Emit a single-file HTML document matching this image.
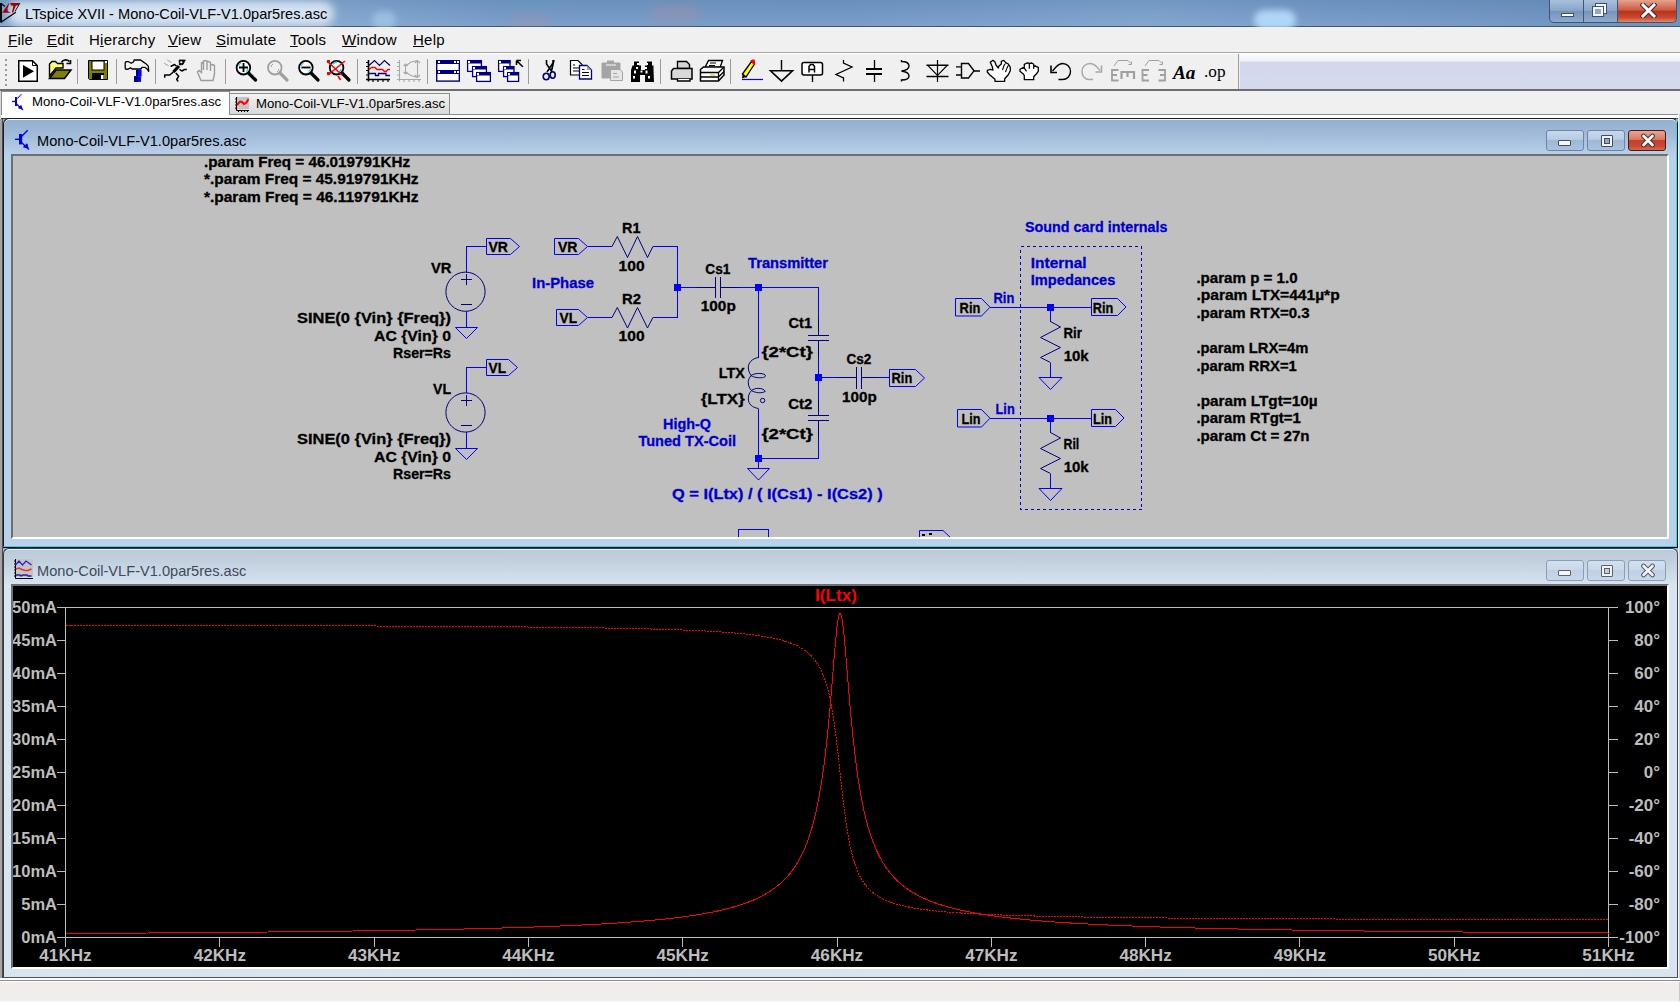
<!DOCTYPE html>
<html><head><meta charset="utf-8">
<style>
*{margin:0;padding:0;box-sizing:border-box}
html,body{width:1680px;height:1002px;overflow:hidden;background:#9ab3d3;font-family:"Liberation Sans",sans-serif}
.a{position:absolute}
svg text{font-family:"Liberation Sans",sans-serif}
#title{left:0;top:0;width:1680px;height:27px;background:linear-gradient(90deg,#7c9fc8 0%,#88abd2 14%,#7198c4 30%,#6f96c3 50%,#7aa0ca 68%,#7097c4 80%,#6f96c3 100%);border-bottom:1px solid #44566e}
#title .glow{left:8px;top:1px;width:326px;height:25px;border-radius:12px;background:rgba(226,236,248,.85);filter:blur(4px)}
#title .txt{left:25px;top:6px;font-size:14.6px;color:#000;white-space:nowrap}
.wb{top:0;height:23px;border:1px solid #44556a;border-top:none;background:linear-gradient(#a9c1de,#86a3c6 50%,#7593b9 51%,#8eaad0)}
#menu{left:0;top:27px;width:1680px;height:26px;background:#f0f0f0;border-bottom:1px solid #c4c4c4}
#menu span{position:absolute;top:4px;font-size:15px;letter-spacing:0.25px;color:#000;white-space:nowrap}
#menu u{text-decoration:underline;text-underline-offset:1px;text-decoration-thickness:1px}
#tool{left:0;top:53px;width:1680px;height:38px;background:#f0f0f0;border-bottom:2px solid #6e6e6e}
#tool .rest{left:1240px;top:0;width:440px;height:36px;background:linear-gradient(#ffffff 0,#eef0f8 8px,#d3d9ec 9px,#d4d9ed 100%)}
#tabs{left:0;top:91px;width:1680px;height:28px;background:#f0f0f0}
#tabs .line{left:0;top:23px;width:1680px;height:1px;background:#898c95}
#tabs .wl{left:0;top:24px;width:1680px;height:3px;background:#fff}
#tabs .dl{left:0;top:27px;width:1680px;height:1px;background:#3c3c3c}
.tab{height:23px;white-space:nowrap;font-size:13.2px;color:#000}
#tab1{left:1px;top:0;width:229px;height:24px;background:#fff;border:1px solid #898c95;border-bottom:none}
#tab2{left:229px;top:2px;width:221px;height:21px;background:linear-gradient(#f2f2f2,#e6e6e6 50%,#d8d8d8);border:1px solid #898c95;border-bottom:none}
#mdi{left:0;top:119px;width:1680px;height:860px;background:#9ab3d3}
#status{left:0;top:978px;width:1680px;height:24px;background:#f0edeb;border-top:2px solid #fff}
.win{left:3px;width:1675px;border:1px solid #1c1c1c;border-radius:6px 6px 0 0}
.win .ttl{left:33px;white-space:nowrap;font-size:14.6px}
.cont{left:7px;width:1658px;height:385px;border-style:solid;border-width:2px;border-color:#6f6f6f #ffffff #ffffff #6f6f6f;overflow:hidden}
.btn{width:38px;height:21px;border:1px solid #6d84a4;border-radius:3px}
</style></head><body>
<div id="title" class="a">
  <div class="a" style="left:0;top:0;width:1680px;height:26px;background:linear-gradient(rgba(60,90,130,.12),rgba(255,255,255,0) 45%,rgba(255,255,255,.08))"></div>
  <div class="a" style="left:1380px;top:0;width:300px;height:26px;background:linear-gradient(90deg,rgba(50,80,120,0),rgba(50,80,120,.12))"></div>
  <div class="a" style="left:1254px;top:10px;width:42px;height:20px;border-radius:12px;background:#b9e0ff;filter:blur(3px);opacity:.85"></div>
  <div class="a" style="left:372px;top:11px;width:24px;height:18px;border-radius:10px;background:#a9d0ee;filter:blur(3px);opacity:.6"></div>
  <div class="a" style="left:510px;top:15px;width:40px;height:12px;border-radius:8px;background:#b88a9c;filter:blur(5px);opacity:.3"></div>
  <div class="a" style="left:650px;top:4px;width:50px;height:18px;border-radius:8px;background:#b88a9c;filter:blur(5px);opacity:.28"></div>
  <div class="a glow"></div>
  <div class="a txt">LTspice XVII - Mono-Coil-VLF-V1.0par5res.asc</div>
  <svg class="a" style="left:0;top:0" width="24" height="26">
    <path d="M1 3V22.6" stroke="#000" stroke-width="1.9"/>
    <path d="M1 3.5L5 6.5" stroke="#000" stroke-width="1.2"/>
    <path d="M1 22.2L15.8 12.3" stroke="#000" stroke-width="1.3"/>
    <path d="M2.2 12.7L6.5 6.5L8.6 3.2H9.2L7.5 8.5L7.8 11.2L10.8 12.7Z" fill="#a00000"/>
    <path d="M10.3 3.1H19.8L18.2 5.2L15.8 5.8L13.2 12.6H11.8L13 8L13.3 5.8L10.8 5.3Z" fill="#a00000"/>
    <path d="M19.8 3.2L15 11.5" stroke="#000" stroke-width="0.9"/>
  </svg>
  <div class="a wb" style="left:1549px;width:35px;border-radius:0 0 0 5px"><div class="a" style="left:11px;top:13px;width:13px;height:4px;background:#fff;border:1px solid #3f4f66"></div></div>
  <div class="a wb" style="left:1583px;width:35px"><div class="a" style="left:12px;top:4px;width:10px;height:9px;border:2px solid #f4f6f9;box-shadow:0 0 0 1px #3f4f66"></div><div class="a" style="left:9px;top:7px;width:10px;height:9px;border:2px solid #f4f6f9;box-shadow:0 0 0 1px #3f4f66;background:#8ea9cb"></div></div>
  <div class="a wb" style="left:1617px;width:60px;border-radius:0 0 5px 0;background:linear-gradient(#e5a48c,#cf5a43 45%,#b8321c 52%,#c9492f 80%,#dd8a6c)">
    <svg class="a" style="left:22px;top:3px" width="17" height="15"><path d="M3 2 L14 13 M14 2 L3 13" stroke="#3e2a2a" stroke-width="5" stroke-linecap="square"/><path d="M3 2 L14 13 M14 2 L3 13" stroke="#fff" stroke-width="3" stroke-linecap="square"/></svg>
  </div>
</div>
<div id="menu" class="a">
  <span style="left:8px"><u>F</u>ile</span>
  <span style="left:47px"><u>E</u>dit</span>
  <span style="left:89px">H<u>i</u>erarchy</span>
  <span style="left:168px"><u>V</u>iew</span>
  <span style="left:216px"><u>S</u>imulate</span>
  <span style="left:290px"><u>T</u>ools</span>
  <span style="left:342px"><u>W</u>indow</span>
  <span style="left:413px"><u>H</u>elp</span>
</div>
<div id="tool" class="a">
  <div class="a rest"></div>
</div>
<svg class="a" style="left:0;top:0" width="1680" height="92">
<path d="M0 52.5H1680" stroke="#a6a6a6"/>
<path d="M0 53.5H1239" stroke="#fff"/>
<!-- grip -->
<g fill="#9a9a9a"><rect x="5" y="59" width="2" height="2"/><rect x="5" y="64" width="2" height="2"/><rect x="5" y="69" width="2" height="2"/><rect x="5" y="74" width="2" height="2"/><rect x="5" y="79" width="2" height="2"/><rect x="5" y="84" width="2" height="2"/></g>
<!-- separators -->
<g stroke="#9c9c9c" shape-rendering="crispEdges">
<path d="M77.5 59V84M116.5 59V84M155.5 59V84M225.5 59V84M357.5 59V84M427.5 59V84M528.5 59V84M660.5 59V84M730.5 59V84"/>
<path d="M1238.5 54V89"/>
</g>
<!-- run -->
<path d="M18.75 60.75H32.5L37.25 65.5V81.25H18.75Z" fill="#fff" stroke="#000" stroke-width="1.5"/>
<path d="M32.5 61V65.5H37" fill="none" stroke="#000"/>
<path d="M23 65L34 71.3L23 77.7Z" fill="#000"/>
<!-- open -->
<path d="M49.5 76V64L52 61.5H55.5L57.5 63.5H63V68H56Z" fill="#ffff70" stroke="#000" stroke-width="1.4"/>
<path d="M49.5 78.5H64.5L71 70H56Z" fill="#808000" stroke="#000" stroke-width="1.5"/>
<path d="M61.5 62.5C62.5 59.5 66.5 59 69.5 61.5" fill="none" stroke="#000" stroke-width="1.6"/>
<path d="M66.5 63.5H70.5V60" fill="none" stroke="#000" stroke-width="1.6"/>
<!-- save -->
<path d="M88.5 60.5H107.5V79.5H89.5L88.5 78.5Z" fill="#808000" stroke="#000"/>
<rect x="92" y="61" width="12" height="9" fill="#fff" stroke="#000"/>
<rect x="105" y="61" width="2" height="2" fill="#fff"/>
<rect x="92" y="73" width="12" height="6.5" fill="#000"/>
<rect x="101" y="75" width="2.5" height="4" fill="#fff"/>
<!-- hammer -->
<path d="M125.2 62.9L126 61.7H128.5L131.3 63.3L133.7 61.7L134.1 60H140.6L143.5 62.1L145.9 63.7L148.3 66.1L148.7 71.4L147.1 69L144.7 67.3H142.2L140.6 69H132.1L130.5 67.7L128.5 69L126 69.4L125.2 68.2Z" fill="#f4f4f4" stroke="#000" stroke-width="1.3" stroke-linejoin="round"/>
<rect x="136" y="69.6" width="5.6" height="6.8" fill="#0000ff"/>
<rect x="136" y="69.6" width="2" height="6.8" fill="#000080"/>
<rect x="134.1" y="76.2" width="6.9" height="5.7" fill="#0000ff"/>
<rect x="134.1" y="76.2" width="3.7" height="5.7" fill="#000080"/>
<!-- runner -->
<g stroke="#000" fill="none" stroke-linejoin="round">
<path d="M179.1 60H185.3L183 64.5L179.5 65Z" fill="#000" stroke-width="0.8"/>
<rect x="180.3" y="61.3" width="2" height="1.8" fill="#fff" stroke="none"/>
<path d="M179 66L173.4 72" stroke-width="3.2"/>
<path d="M170.6 66.5L174.6 64.5L176.5 66.3" stroke-width="1.5"/>
<path d="M179.5 69.4L181.9 71L184.8 69.4H186.8" stroke-width="1.5"/>
<path d="M173.6 71.8L169.8 75H164.7V77.8" stroke-width="1.5"/>
<path d="M175.8 73L178.7 76.2L176.7 79.5L178.2 81.5" stroke-width="1.5"/>
<path d="M167.3 60L171.4 62.5M164.1 63.3L168.6 65.7" stroke="#a0a0a0" stroke-width="1"/>
</g>
<!-- hand gray -->
<path d="M201 80.5L197.5 72L199 70.5L201.5 72.5V63L203.5 62V70V61L205.5 60.5L207 61V70V62L209 61.5L210.5 62.5V71V65L212.5 64.5L214.5 65.5V74L213 80.5Z" fill="none" stroke="#9c9c9c" stroke-width="1.4"/>
<!-- zooms -->
<g>
<path d="M248.5 73L255.5 80" stroke="#000" stroke-width="3.2" stroke-linecap="round"/>
<circle cx="243.4" cy="67.7" r="6.8" fill="#fff" stroke="#000" stroke-width="1.8"/>
<path d="M238.5 66A5 5 0 0 1 241 63M246 71.5A5 5 0 0 0 248 69" stroke="#00e0ff" stroke-width="1.2" fill="none"/>
<path d="M239 67.5H248M243.5 63V72" stroke="#000" stroke-width="1.8"/>
<path d="M280 73L287 80" stroke="#a0a0a0" stroke-width="3.2" stroke-linecap="round"/>
<circle cx="274.8" cy="67.7" r="6.8" fill="none" stroke="#a0a0a0" stroke-width="1.8"/>
<path d="M271 67A4 4 0 0 1 273 64M277 72A4 4 0 0 0 279 69" stroke="#a0a0a0" stroke-width="1" fill="none"/>
<path d="M311 73L318 80" stroke="#000" stroke-width="3.2" stroke-linecap="round"/>
<circle cx="305.9" cy="67.7" r="6.8" fill="#fff" stroke="#000" stroke-width="1.8"/>
<path d="M301 66A5 5 0 0 1 303.5 63M308.5 71.5A5 5 0 0 0 310.5 69" stroke="#00e0ff" stroke-width="1.2" fill="none"/>
<path d="M301.5 67.5H310.5" stroke="#000" stroke-width="1.8"/>
<path d="M342 73L349 80" stroke="#000" stroke-width="3.2" stroke-linecap="round"/>
<circle cx="336.6" cy="67.7" r="6.8" fill="#fff" stroke="#000" stroke-width="1.8"/>
<path d="M333 64A5 5 0 0 1 337 62M339 72A5 5 0 0 0 341 69" stroke="#00e0ff" stroke-width="1.4" fill="none"/>
<path d="M327 61L342 75M345 61L328 75M338 76L340.5 80" stroke="#ff0000" stroke-width="1.6"/>
<rect x="327" y="60" width="3" height="3" fill="#f00"/><rect x="327" y="72" width="3" height="3" fill="#f00"/>
</g>
<!-- plot -->
<g fill="none">
<path d="M368.5 60V81.5M366 79.5H390" stroke="#000" stroke-width="1.6"/>
<path d="M366 62.5H368.5M366 66.5H368.5M366 70.5H368.5M366 75H368.5M373 79.5V82M378 79.5V82M383 79.5V82M388 79.5V82" stroke="#000" stroke-width="1.2"/>
<path d="M369 65.5L374.5 60.5L379.5 65.5L384.5 60.5L390 65.5" stroke="#000080" stroke-width="1.2"/>
<path d="M369 69.5L371.5 67.5H375L377 69.5H382.5L384.5 71.5H386L388 69.5H390" stroke="#ff0000" stroke-width="1.4"/>
<path d="M369 73.5H375.5V75.5H378.5V73.5H386V75.5H390" stroke="#000080" stroke-width="1.3"/>
</g>
<g fill="none" stroke="#a8a8a8" stroke-width="1.1">
<path d="M399.5 60V81.5M397 79.5H421M397 62.5H399.5M397 66.5H399.5M397 70.5H399.5M397 75H399.5M404 79.5V82M409 79.5V82M414 79.5V82M419 79.5V82"/>
<path d="M405 66.5L411 62L417.5 60.5M405 72L411 75.5L417.5 77.5M405.5 64V74M403.5 66L405.5 64L407.5 66M403.5 72L405.5 74L407.5 72M417.5 60.5V77.5M415 63L417.5 60.5L420 63M415 75L417.5 77.5L420 75"/>
</g>
<!-- tile -->
<g fill="none" stroke="#000080" stroke-width="1.4">
<rect x="436.7" y="60.7" width="22.6" height="20.4" fill="#fff"/>
</g>
<rect x="436" y="60" width="24" height="4" fill="#000080"/>
<rect x="436" y="70" width="24" height="4" fill="#000080"/>
<g fill="#fff"><rect x="438" y="61" width="2" height="2"/><rect x="454" y="61" width="2" height="2"/><rect x="457" y="61" width="2" height="2"/><rect x="438" y="71" width="2" height="2"/><rect x="454" y="71" width="2" height="2"/><rect x="457" y="71" width="2" height="2"/></g>
<!-- cascade -->
<g stroke="#000080" stroke-width="1.3" fill="#fff">
<rect x="467.6" y="60.6" width="13.8" height="10.8"/>
<rect x="472.6" y="66.6" width="13.8" height="10"/>
<rect x="476.6" y="72.6" width="13.8" height="8.8"/>
<rect x="498.6" y="60.6" width="11.4" height="10.8"/>
<rect x="503.6" y="66.6" width="10.4" height="10"/>
<rect x="507.6" y="72.6" width="11" height="8.8"/>
</g>
<g fill="#000080"><rect x="467" y="60" width="15" height="3.5"/><rect x="472" y="66" width="15" height="3.5"/><rect x="476" y="72" width="15" height="3.5"/><rect x="498" y="60" width="12.5" height="3.5"/><rect x="503" y="66" width="11" height="3.5"/><rect x="507" y="72" width="12" height="3.5"/></g>
<g fill="#fff"><rect x="468" y="61" width="2" height="2"/><rect x="473" y="67" width="2" height="2"/><rect x="477" y="73" width="2" height="2"/><rect x="499" y="61" width="2" height="2"/><rect x="504" y="67" width="2" height="2"/><rect x="508" y="73" width="2" height="2"/></g>
<path d="M516.5 60.5H521M516.5 60.5V65M517 61L522.5 66.5V67" stroke="#000" stroke-width="1.5" fill="none"/>
<!-- scissors -->
<path d="M546.5 60V64L551.5 71L554 60M553 60V63L547 72" stroke="#000" stroke-width="1.6" fill="none"/>
<ellipse cx="546.2" cy="76.5" rx="3" ry="3.3" fill="none" stroke="#000080" stroke-width="1.6"/>
<ellipse cx="552.7" cy="75" rx="2.5" ry="3.3" fill="none" stroke="#000080" stroke-width="1.6"/>
<!-- copy -->
<path d="M570.5 60.5H578L582 64.5V75H570.5Z" fill="#fff" stroke="#000" stroke-width="1.2"/>
<path d="M573 65H575M573 68H580M573 71H580" stroke="#000" stroke-width="1"/>
<path d="M579.5 65.5H587L591.5 70V79H579.5Z" fill="#fff" stroke="#000080" stroke-width="1.3"/>
<path d="M582 69.5H584.5M582 72.5H589M582 75.5H589" stroke="#000" stroke-width="1.1"/>
<path d="M587 65.5V70H591.5" fill="#a0a0a0"/>
<!-- paste gray -->
<path d="M602.5 62.5H607V60.5H614V62.5H619.5Q620.5 62.5 620.5 63.5V77.5Q620.5 78.5 619.5 78.5H602.5Q601.5 78.5 601.5 77.5V63.5Q601.5 62.5 602.5 62.5Z" fill="#a4a4a4"/>
<path d="M606 65H616" stroke="#e8e8e8" stroke-width="1.3"/>
<path d="M610.5 69.5H620L622.5 72V80.5H610.5Z" fill="#e6e6e6" stroke="#a4a4a4" stroke-width="1"/>
<path d="M613 73.5H617M613 77H619" stroke="#a4a4a4"/>
<!-- binoculars -->
<path d="M634 61.5H639V65.5H641V70H645V65.5H647V61.5H652V65.5H653.5V70L654 82H645V75H640V82H631V70L632.5 65.5H634Z" fill="#000"/>
<g fill="#fff"><rect x="637" y="63" width="2" height="2"/><rect x="646" y="63" width="2" height="2"/><rect x="636" y="67" width="2" height="2"/><rect x="645" y="67" width="2" height="2"/><rect x="634" y="70.5" width="2" height="3"/><rect x="640.5" y="70.5" width="2" height="2"/><rect x="645.5" y="70.5" width="2" height="3"/><rect x="633" y="76" width="2" height="2.5"/><rect x="648" y="76" width="2" height="2.5"/></g>
<!-- printers -->
<path d="M677.5 61.5H686.5L689.5 64.5V68.5H677.5Z" fill="#d8d8d8" stroke="#000" stroke-width="1.4"/>
<path d="M673.5 68.5H692V79H671.5V71Z" fill="#d8d8d8" stroke="#000" stroke-width="1.5"/>
<path d="M677.5 79V81H690V79" fill="#fff" stroke="#000" stroke-width="1.4"/>
<path d="M708.5 60.5H722.5L720 67.5H705Z" fill="#fff" stroke="#000" stroke-width="1.4"/>
<path d="M710 63H716M709 65.5H715" stroke="#000" stroke-width="1.1"/>
<path d="M700.5 69.5L703.5 67H724V75L718.5 81H700.5Z" fill="#fff" stroke="#000" stroke-width="1.5"/>
<path d="M700.5 72.5H718.5L724 67M700.5 77H718.5L724 71.5M718.5 72.5V81" fill="none" stroke="#000" stroke-width="1.3"/>
<path d="M710 75H715" stroke="#e0d000" stroke-width="1.2"/>
<!-- pencil -->
<path d="M742.5 74L751.5 61.5L754.5 64L746 77Z" fill="#ffff00" stroke="#000" stroke-width="1.3"/>
<path d="M751 61L752.5 60H754L754.5 61.5V64Z" fill="#ff0000" stroke="#ff0000" stroke-width="1.2"/>
<path d="M742.5 74L742 78.5L746 77Z" fill="#000"/>
<path d="M742 79.5H763" stroke="#0000ff" stroke-width="1.2"/>
<!-- ground -->
<path d="M781.5 60V71" stroke="#000" stroke-width="1.4"/>
<path d="M770.5 70.8H792.5L781.5 81.2Z" fill="none" stroke="#000" stroke-width="1.6"/>
<!-- label -->
<rect x="802" y="62.5" width="20.5" height="12.5" rx="2" fill="#fff" stroke="#000" stroke-width="1.5"/>
<path d="M812.5 75V82" stroke="#000" stroke-width="1.4"/>
<path d="M809 72.5V66.5L810.5 64.5H813L814.5 66.5V72.5M809 69.5H814.5" stroke="#000" stroke-width="1.5" fill="none"/>
<!-- resistor -->
<path d="M843.5 60V63L852 67L836 74.5L843.5 78V81.5" fill="none" stroke="#000" stroke-width="1.3"/>
<!-- capacitor -->
<path d="M874.5 60V69M874.5 74V82" stroke="#000" stroke-width="1.3"/>
<path d="M866 69H882M866 74H882" stroke="#000" stroke-width="1.8"/>
<!-- inductor -->
<path d="M901.5 60V61.5C907 61.5 909 63 909 66C909 69 905 70.5 901.5 71C905 71.5 909 73 909 76C909 79 907 80 901.5 80V81.5" fill="none" stroke="#000" stroke-width="1.4"/>
<!-- diode -->
<path d="M937.5 60V82" stroke="#000" stroke-width="1.2"/>
<path d="M926.5 65.2H948.5M926.5 76.5H948.5" stroke="#000" stroke-width="1.4"/>
<path d="M927.5 65.2L937.5 75.5L947.5 65.2" fill="none" stroke="#000" stroke-width="1.2"/>
<!-- and gate -->
<path d="M961.5 63.5H968.5L974 70.8L968.5 78H961.5Z" fill="none" stroke="#000" stroke-width="1.4"/>
<path d="M956 66.8H961.5M956 75H961.5M974 71H980" stroke="#000" stroke-width="1.3"/>
<!-- hand open -->
<path d="M995 81.3H1004.7V78.7L1008.3 74.7L1010.3 70.7V67.3L1008.3 64L1005.7 62.7L1003.7 60.3L1001.3 61.3V64L999 66L998.3 68L996 65L995 62L993 60.3L990.3 62.3L992.3 66.7L993 70L990.3 69.3L987.3 70.3V72L989.7 74.7L992.3 77L995 79.3Z" fill="#fff" stroke="#000" stroke-width="1.3" stroke-linejoin="round"/>
<path d="M1002.5 70L1004 65.5L1005.5 63.5M1005.5 72L1007 68L1008.5 65" fill="none" stroke="#000" stroke-width="1.1"/>
<!-- hand fist -->
<path d="M1024.3 79.7H1033.7V76.7L1036.3 74L1038.3 71.3V67.3L1036 66.3L1033.7 66V64.3L1031.7 63L1029.7 63.3L1027 63L1024.3 64.3V67.3L1022.3 68L1020 69.3V71.3L1023.3 74L1024.3 75.7Z" fill="#fff" stroke="#000" stroke-width="1.3" stroke-linejoin="round"/>
<path d="M1029.3 63.5V68.7M1033.7 66V68.7M1022 68.2H1024.3L1026.5 71.3M1033.7 66.2H1036" fill="none" stroke="#000" stroke-width="1.2"/>
<!-- undo -->
<path d="M1058.5 79.5H1062.5C1067 79.5 1070.5 76 1070.5 71.5C1070.5 67 1067 63.5 1062.5 63.5C1060 63.5 1058 65 1056 67L1052.5 71" fill="none" stroke="#000" stroke-width="1.4"/>
<path d="M1051 65.5V72.5H1057" fill="none" stroke="#000" stroke-width="1.6"/>
<!-- redo gray -->
<path d="M1093 79.5H1089C1085 79.5 1082 76 1082 71.5C1082 67 1085.5 63.5 1090 63.5C1093 63.5 1095 65 1097 67L1100 70.5" fill="none" stroke="#a8a8a8" stroke-width="1.4"/>
<path d="M1101.5 65.5V72H1095.5" fill="none" stroke="#a8a8a8" stroke-width="1.6"/>
<!-- rotate/mirror gray -->
<g fill="none" stroke="#a0a0a0">
<path d="M1118.5 70H1112V80.5H1118.5M1112 75H1117" stroke-width="1.8"/>
<path d="M1121.5 79V72H1134V79M1127.5 72V77" stroke-width="2.2"/>
<path d="M1114 66L1118 60.5H1128L1131 63.5M1128.5 64.5H1131.5V61.5" stroke-width="1"/>
<path d="M1149 70H1142.5V80.5H1149M1142.5 75H1147.5" stroke-width="1.8"/>
<path d="M1158.5 70H1165V80.5H1158.5M1165 75H1160" stroke-width="1.8"/>
<path d="M1145 66L1149 60.5H1159L1162 63.5M1159.5 64.5H1162.5V61.5" stroke-width="1"/>
</g>
<!-- Aa .op -->
<text x="1173" y="78.8" style="font-family:'Liberation Serif';font-weight:bold;font-style:italic;font-size:19px" fill="#000" textLength="22.5" lengthAdjust="spacingAndGlyphs">Aa</text>
<text x="1204" y="77" style="font-family:'Liberation Serif';font-size:17px" fill="#000" textLength="21.5" lengthAdjust="spacingAndGlyphs">.op</text>
</svg>
<div id="tabs" class="a">
  <div class="a line"></div>
  <div class="a wl"></div>
  <div class="a dl"></div>
  <div class="a" style="left:0;top:0;width:1px;height:28px;background:#d8d8d8"></div>
  <div id="tab2" class="a tab">
    <svg class="a" style="left:3px;top:2px" width="17" height="17">
      <rect x="3" y="1" width="13" height="12" fill="#c4c4c4"/>
      <path d="M3.5 1V14.5H16" stroke="#000" fill="none"/>
      <path d="M2 3h1.5M2 6h1.5M2 9h1.5M2 12h1.5M5.5 14.5v1.5M8.5 14.5v1.5M11.5 14.5v1.5M14.5 14.5v1.5" stroke="#000"/>
      <path d="M4 9 L7 5.5 L9 6 L11 8 L13.5 6.5 L15.5 3" stroke="#f00" stroke-width="2" fill="none"/>
    </svg>
    <div class="a" style="left:26px;top:2px">Mono-Coil-VLF-V1.0par5res.asc</div>
  </div>
  <div id="tab1" class="a tab">
    <svg class="a" style="left:10px;top:2px" width="14" height="18">
      <path d="M0 7.5H3.5" stroke="#0000e8" stroke-width="1.3"/>
      <rect x="3" y="3" width="2" height="9" fill="#0000d0"/>
      <path d="M4.5 5L10 0" stroke="#0000e8" stroke-width="1.2" stroke-dasharray="1.2,0.6"/>
      <path d="M4.5 10L11 16" stroke="#0000e8" stroke-width="1.2"/>
      <path d="M6.5 14L9 11.5L10 14.5Z" fill="#0000c0" stroke="#0000c0"/>
    </svg>
    <div class="a" style="left:30px;top:2px">Mono-Coil-VLF-V1.0par5res.asc</div>
  </div>
</div>
<div id="mdi" class="a">
  <div class="a" style="left:0;top:0;width:2px;height:860px;background:#a3a3a3"></div>
  <div class="a" style="left:2px;top:0;width:1px;height:860px;background:#4a4a4a"></div>
  <div class="a" style="left:1678px;top:-5px;width:2px;height:865px;background:#f0f0f0;border-right:1px solid #d4d4d4"></div>
</div>

<!-- schematic window (active) -->
<div class="a win" style="top:118px;height:430px;background:linear-gradient(#93afd0 0,#a0b9d7 14px,#b2cae4 30px,#b9d2ec 36px);box-shadow:inset 0 1px 0 #f4f8fc;border-color:#1c1c1c #111 #0a0a0a #1c1c1c">
  <div class="a" style="left:-1px;top:-1px;width:1674px;height:429px;border:1px solid transparent;border-right-color:#39d0f0;border-bottom-color:#39d0f0;pointer-events:none"></div>
  <svg class="a" style="left:11px;top:10px" width="16" height="22">
    <path d="M0 10.3H4.5" stroke="#0000f0" stroke-width="1.4"/>
    <rect x="4" y="5" width="3.2" height="10.4" fill="#0000e0"/>
    <path d="M6.5 7.5L12.7 1.2" stroke="#0000f0" stroke-width="1.3"/>
    <path d="M6.5 13.5L14 20.5" stroke="#0000f0" stroke-width="1.3"/>
    <path d="M8.5 18L12 14.8L13 19Z" fill="#0000e0" stroke="#0000e0"/>
  </svg>
  <div class="a ttl" style="top:14px;color:#000">Mono-Coil-VLF-V1.0par5res.asc</div>
  <div class="a btn" style="left:1542px;top:11px;background:linear-gradient(#c8d9ee,#b5cae3 45%,#9fb8d6 50%,#a9c2e0)"><div class="a" style="left:11px;top:9px;width:13px;height:6px;background:#f6f6f6;border:1px solid #444c5c;border-radius:1px"></div></div>
  <div class="a btn" style="left:1583px;top:11px;background:linear-gradient(#c8d9ee,#b5cae3 45%,#9fb8d6 50%,#a9c2e0)"><div class="a" style="left:13px;top:4px;width:12px;height:12px;background:#f2f2f2;border:1px solid #444c5c;border-radius:1px"><div class="a" style="left:2px;top:2px;width:6px;height:6px;border:1px solid #444c5c;background:#8fa7c8"></div></div></div>
  <div class="a btn" style="left:1624px;top:11px;border-color:#4a1818;background:linear-gradient(#e8a693,#d9775f 45%,#c2402a 50%,#c94a31 80%,#d56a50)">
    <svg class="a" style="left:11px;top:2px" width="16" height="15"><path d="M3.5 3 L12.5 12 M12.5 3 L3.5 12" stroke="#42303a" stroke-width="4.6" stroke-linecap="round"/><path d="M3.5 3 L12.5 12 M12.5 3 L3.5 12" stroke="#fff" stroke-width="2.6" stroke-linecap="round"/></svg>
  </div>
  <div class="a cont" style="top:35px;background:#c0c0c0">
<svg class="a" style="left:-13px;top:-156px" width="1680" height="560">
<g font-weight="bold" font-size="14.5">
<text x="204" y="167" textLength="206" lengthAdjust="spacingAndGlyphs" fill="#000" stroke="#000" stroke-width="0.3">.param Freq = 46.019791KHz</text>
<text x="204" y="184" textLength="214.5" lengthAdjust="spacingAndGlyphs" fill="#000" stroke="#000" stroke-width="0.3">*.param Freq = 45.919791KHz</text>
<text x="204" y="201.5" textLength="214.5" lengthAdjust="spacingAndGlyphs" fill="#000" stroke="#000" stroke-width="0.3">*.param Freq = 46.119791KHz</text>
<text x="431" y="272.5" textLength="20.5" lengthAdjust="spacingAndGlyphs" fill="#000" stroke="#000" stroke-width="0.3">VR</text>
<text x="297" y="323" textLength="154" lengthAdjust="spacingAndGlyphs" fill="#000" stroke="#000" stroke-width="0.3">SINE(0 {Vin} {Freq})</text>
<text x="374" y="341" textLength="77" lengthAdjust="spacingAndGlyphs" fill="#000" stroke="#000" stroke-width="0.3">AC {Vin} 0</text>
<text x="393" y="357.5" textLength="58" lengthAdjust="spacingAndGlyphs" fill="#000" stroke="#000" stroke-width="0.3">Rser=Rs</text>
<text x="433" y="394" textLength="18" lengthAdjust="spacingAndGlyphs" fill="#000" stroke="#000" stroke-width="0.3">VL</text>
<text x="297" y="444" textLength="154" lengthAdjust="spacingAndGlyphs" fill="#000" stroke="#000" stroke-width="0.3">SINE(0 {Vin} {Freq})</text>
<text x="374" y="461.5" textLength="77" lengthAdjust="spacingAndGlyphs" fill="#000" stroke="#000" stroke-width="0.3">AC {Vin} 0</text>
<text x="393" y="478.5" textLength="58" lengthAdjust="spacingAndGlyphs" fill="#000" stroke="#000" stroke-width="0.3">Rser=Rs</text>
<text x="488.5" y="252" textLength="19.5" lengthAdjust="spacingAndGlyphs" fill="#000" stroke="#000" stroke-width="0.3">VR</text>
<text x="488.5" y="373" textLength="17.5" lengthAdjust="spacingAndGlyphs" fill="#000" stroke="#000" stroke-width="0.3">VL</text>
<text x="558" y="252" textLength="19.5" lengthAdjust="spacingAndGlyphs" fill="#000" stroke="#000" stroke-width="0.3">VR</text>
<text x="559.5" y="323" textLength="17.5" lengthAdjust="spacingAndGlyphs" fill="#000" stroke="#000" stroke-width="0.3">VL</text>
<text x="622" y="233" textLength="18.5" lengthAdjust="spacingAndGlyphs" fill="#000" stroke="#000" stroke-width="0.3">R1</text>
<text x="618.6" y="271" textLength="26" lengthAdjust="spacingAndGlyphs" fill="#000" stroke="#000" stroke-width="0.3">100</text>
<text x="622" y="304" textLength="19" lengthAdjust="spacingAndGlyphs" fill="#000" stroke="#000" stroke-width="0.3">R2</text>
<text x="618.6" y="341" textLength="26" lengthAdjust="spacingAndGlyphs" fill="#000" stroke="#000" stroke-width="0.3">100</text>
<text x="705.3" y="274" textLength="25" lengthAdjust="spacingAndGlyphs" fill="#000" stroke="#000" stroke-width="0.3">Cs1</text>
<text x="700.8" y="311" textLength="35" lengthAdjust="spacingAndGlyphs" fill="#000" stroke="#000" stroke-width="0.3">100p</text>
<text x="788.6" y="328" textLength="23.5" lengthAdjust="spacingAndGlyphs" fill="#000" stroke="#000" stroke-width="0.3">Ct1</text>
<text x="761.4" y="357.2" textLength="51.5" lengthAdjust="spacingAndGlyphs" fill="#000" stroke="#000" stroke-width="0.3">{2*Ct}</text>
<text x="846.4" y="364" textLength="25" lengthAdjust="spacingAndGlyphs" fill="#000" stroke="#000" stroke-width="0.3">Cs2</text>
<text x="842" y="402" textLength="34.7" lengthAdjust="spacingAndGlyphs" fill="#000" stroke="#000" stroke-width="0.3">100p</text>
<text x="891.6" y="382.8" textLength="20.7" lengthAdjust="spacingAndGlyphs" fill="#000" stroke="#000" stroke-width="0.3">Rin</text>
<text x="788.3" y="409" textLength="24" lengthAdjust="spacingAndGlyphs" fill="#000" stroke="#000" stroke-width="0.3">Ct2</text>
<text x="761.4" y="438.8" textLength="51.5" lengthAdjust="spacingAndGlyphs" fill="#000" stroke="#000" stroke-width="0.3">{2*Ct}</text>
<text x="718.7" y="378.2" textLength="26.2" lengthAdjust="spacingAndGlyphs" fill="#000" stroke="#000" stroke-width="0.3">LTX</text>
<text x="700.7" y="403.6" textLength="44.2" lengthAdjust="spacingAndGlyphs" fill="#000" stroke="#000" stroke-width="0.3">{LTX}</text>
<text x="959.6" y="312.7" textLength="20.8" lengthAdjust="spacingAndGlyphs" fill="#000" stroke="#000" stroke-width="0.3">Rin</text>
<text x="1092.8" y="312.7" textLength="20.5" lengthAdjust="spacingAndGlyphs" fill="#000" stroke="#000" stroke-width="0.3">Rin</text>
<text x="1063.4" y="337.6" textLength="18.4" lengthAdjust="spacingAndGlyphs" fill="#000" stroke="#000" stroke-width="0.3">Rir</text>
<text x="1063.7" y="360.6" textLength="25" lengthAdjust="spacingAndGlyphs" fill="#000" stroke="#000" stroke-width="0.3">10k</text>
<text x="961.4" y="424" textLength="19" lengthAdjust="spacingAndGlyphs" fill="#000" stroke="#000" stroke-width="0.3">Lin</text>
<text x="1093" y="424" textLength="19" lengthAdjust="spacingAndGlyphs" fill="#000" stroke="#000" stroke-width="0.3">Lin</text>
<text x="1063.5" y="449" textLength="15.8" lengthAdjust="spacingAndGlyphs" fill="#000" stroke="#000" stroke-width="0.3">Ril</text>
<text x="1063.7" y="471.8" textLength="25" lengthAdjust="spacingAndGlyphs" fill="#000" stroke="#000" stroke-width="0.3">10k</text>
<text x="1196.4" y="282.7" textLength="101.2" lengthAdjust="spacingAndGlyphs" fill="#000" stroke="#000" stroke-width="0.3">.param p = 1.0</text>
<text x="1196.4" y="300" textLength="143.3" lengthAdjust="spacingAndGlyphs" fill="#000" stroke="#000" stroke-width="0.3">.param LTX=441µ*p</text>
<text x="1196.4" y="317.8" textLength="113.2" lengthAdjust="spacingAndGlyphs" fill="#000" stroke="#000" stroke-width="0.3">.param RTX=0.3</text>
<text x="1196.4" y="353" textLength="111.9" lengthAdjust="spacingAndGlyphs" fill="#000" stroke="#000" stroke-width="0.3">.param LRX=4m</text>
<text x="1196.4" y="370.5" textLength="100.3" lengthAdjust="spacingAndGlyphs" fill="#000" stroke="#000" stroke-width="0.3">.param RRX=1</text>
<text x="1196.4" y="405.6" textLength="121.1" lengthAdjust="spacingAndGlyphs" fill="#000" stroke="#000" stroke-width="0.3">.param LTgt=10µ</text>
<text x="1196.4" y="423" textLength="104.5" lengthAdjust="spacingAndGlyphs" fill="#000" stroke="#000" stroke-width="0.3">.param RTgt=1</text>
<text x="1196.4" y="440.6" textLength="113.2" lengthAdjust="spacingAndGlyphs" fill="#000" stroke="#000" stroke-width="0.3">.param Ct = 27n</text>
<text x="532" y="288" textLength="62" lengthAdjust="spacingAndGlyphs" fill="#0000cc" stroke="#0000cc" stroke-width="0.3">In-Phase</text>
<text x="748" y="268.2" textLength="80" lengthAdjust="spacingAndGlyphs" fill="#0000cc" stroke="#0000cc" stroke-width="0.3">Transmitter</text>
<text x="663" y="429" textLength="48" lengthAdjust="spacingAndGlyphs" fill="#0000cc" stroke="#0000cc" stroke-width="0.3">High-Q</text>
<text x="638.4" y="446" textLength="97.7" lengthAdjust="spacingAndGlyphs" fill="#0000cc" stroke="#0000cc" stroke-width="0.3">Tuned TX-Coil</text>
<text x="672" y="498.8" textLength="210.6" lengthAdjust="spacingAndGlyphs" fill="#0000cc" stroke="#0000cc" stroke-width="0.3">Q = I(Ltx) / ( I(Cs1) - I(Cs2) )</text>
<text x="1025" y="232" textLength="142.4" lengthAdjust="spacingAndGlyphs" fill="#0000cc" stroke="#0000cc" stroke-width="0.3">Sound card internals</text>
<text x="1030.8" y="268" textLength="55.8" lengthAdjust="spacingAndGlyphs" fill="#0000cc" stroke="#0000cc" stroke-width="0.3">Internal</text>
<text x="1030.8" y="285" textLength="84.6" lengthAdjust="spacingAndGlyphs" fill="#0000cc" stroke="#0000cc" stroke-width="0.3">Impedances</text>
<text x="993.5" y="302.8" textLength="20.8" lengthAdjust="spacingAndGlyphs" fill="#0000cc" stroke="#0000cc" stroke-width="0.3">Rin</text>
<text x="995.5" y="414" textLength="19.2" lengthAdjust="spacingAndGlyphs" fill="#0000cc" stroke="#0000cc" stroke-width="0.3">Lin</text>
</g>
<g stroke-width="1">
<circle cx="465.5" cy="291.7" r="19.6" stroke="#000080" fill="none"/>
<path d="M466.5 274V285M461 279.5H472M461 304.5H472" stroke="#000080" shape-rendering="crispEdges"/>
<path d="M466.5 273 L466.5 246.5 L486 246.5" stroke="#0000ff" fill="none" shape-rendering="crispEdges"/>
<path d="M486.5 238.5 H510.5 L519.5 246.5 L510.5 254.5 H486.5Z" stroke="#0000ff" fill="none"/>
<path d="M466.5 311 L466.5 327.5" stroke="#0000ff" fill="none" shape-rendering="crispEdges"/>
<path d="M455.5 327.5 H477.5 L466.5 338.5Z" stroke="#0000ff" fill="none"/>
<circle cx="465.5" cy="412.5" r="19.6" stroke="#000080" fill="none"/>
<path d="M466.5 395V406M461 400.5H472M461 425.5H472" stroke="#000080" shape-rendering="crispEdges"/>
<path d="M466.5 393 L466.5 367.5 L486 367.5" stroke="#0000ff" fill="none" shape-rendering="crispEdges"/>
<path d="M486.5 359.5 H508.5 L517.5 367.5 L508.5 375.5 H486.5Z" stroke="#0000ff" fill="none"/>
<path d="M466.5 432 L466.5 448.5" stroke="#0000ff" fill="none" shape-rendering="crispEdges"/>
<path d="M455.5 448.5 H477.5 L466.5 459.5Z" stroke="#0000ff" fill="none"/>
<path d="M554.5 238.5 H578.5 L587.5 246.5 L578.5 254.5 H554.5Z" stroke="#0000ff" fill="none"/>
<path d="M556.5 309.5 H578.5 L587.5 317.5 L578.5 325.5 H556.5Z" stroke="#0000ff" fill="none"/>
<path d="M587.5 246.5 L612 246.5" stroke="#0000ff" fill="none" shape-rendering="crispEdges"/>
<path d="M587.5 317.5 L612 317.5" stroke="#0000ff" fill="none" shape-rendering="crispEdges"/>
<path d="M612 246.5 L617.3 236.5 L627.5 257.5 L637.5 236.5 L647.5 257.5 L652.9 246.5" stroke="#000080" fill="none" />
<path d="M612 317.5 L617.3 307.5 L627.5 328 L637.5 307.5 L647.5 328 L652.9 317.5" stroke="#000080" fill="none" />
<path d="M653 246.5 L677.5 246.5 L677.5 317.5 L653 317.5" stroke="#0000ff" fill="none" shape-rendering="crispEdges"/>
<rect x="674.0" y="284.0" width="7" height="7" fill="#0000ff" shape-rendering="crispEdges"/>
<path d="M677.5 287.5 L697 287.5" stroke="#0000ff" fill="none" shape-rendering="crispEdges"/>
<path d="M697 287.5 L715.5 287.5" stroke="#000080" fill="none" shape-rendering="crispEdges"/>
<path d="M715.5 277V298M720.5 277V298" stroke="#000080" shape-rendering="crispEdges"/>
<path d="M720.5 287.5 L739 287.5" stroke="#000080" fill="none" shape-rendering="crispEdges"/>
<path d="M739 287.5 L818.5 287.5 L818.5 318" stroke="#0000ff" fill="none" shape-rendering="crispEdges"/>
<rect x="755.0" y="284.0" width="7" height="7" fill="#0000ff" shape-rendering="crispEdges"/>
<path d="M818.5 318 L818.5 335.5" stroke="#000080" fill="none" shape-rendering="crispEdges"/>
<path d="M808 335.5H829M808 340.5H829" stroke="#000080" shape-rendering="crispEdges"/>
<path d="M818.5 340.5 L818.5 357" stroke="#000080" fill="none" shape-rendering="crispEdges"/>
<path d="M818.5 357 L818.5 399" stroke="#0000ff" fill="none" shape-rendering="crispEdges"/>
<rect x="815.0" y="374.0" width="7" height="7" fill="#0000ff" shape-rendering="crispEdges"/>
<path d="M818.5 377.5 L837 377.5" stroke="#0000ff" fill="none" shape-rendering="crispEdges"/>
<path d="M837 377.5 L856.5 377.5" stroke="#000080" fill="none" shape-rendering="crispEdges"/>
<path d="M856.5 367V389M861.5 367V389" stroke="#000080" shape-rendering="crispEdges"/>
<path d="M861.5 377.5 L879 377.5" stroke="#000080" fill="none" shape-rendering="crispEdges"/>
<path d="M879 377.5 L889.5 377.5" stroke="#0000ff" fill="none" shape-rendering="crispEdges"/>
<path d="M889.5 369.5 H915.5 L924.5 378.0 L915.5 386.5 H889.5Z" stroke="#0000ff" fill="none"/>
<path d="M818.5 399 L818.5 415.5" stroke="#000080" fill="none" shape-rendering="crispEdges"/>
<path d="M808 415.5H829M808 420.5H829" stroke="#000080" shape-rendering="crispEdges"/>
<path d="M818.5 420.5 L818.5 437" stroke="#000080" fill="none" shape-rendering="crispEdges"/>
<path d="M818.5 437 L818.5 458.5 L758.5 458.5" stroke="#0000ff" fill="none" shape-rendering="crispEdges"/>
<rect x="755.0" y="455.0" width="7" height="7" fill="#0000ff" shape-rendering="crispEdges"/>
<path d="M758.5 458.5 L758.5 468.5" stroke="#0000ff" fill="none" shape-rendering="crispEdges"/>
<path d="M747.5 468.5 H769.5 L758.5 480Z" stroke="#0000ff" fill="none"/>
<path d="M758.5 287.5 L758.5 357.5" stroke="#0000ff" fill="none" shape-rendering="crispEdges"/>
<path d="M758.5 357.5 C752 358.5 748 363 748.3 368 C748.5 371 749.5 373 751 375.5 M751 375.5 C755 372.5 765.5 373 765.5 375.8 C765.5 378.5 755 378.5 751 375.5 C748.5 379 748 381 748.3 383 C748.5 386 749.5 388.5 751.5 390.5 M751.5 390.5 C755 387.5 763 387.5 765.5 391.5 M751.5 390.5 C755 393 762 393.5 765 391.5 M751.5 390.5 C749 393.5 748.2 396 748.3 399 C748.5 404 752 407.5 758.5 408.5" stroke="#000080" fill="none"/>
<circle cx="762.6" cy="400.5" r="2.2" stroke="#000080" fill="none"/>
<path d="M758.5 408.5 L758.5 458.5" stroke="#0000ff" fill="none" shape-rendering="crispEdges"/>
<rect x="1020.5" y="246.5" width="121" height="263" stroke="#0000cc" fill="none" stroke-dasharray="3,3" shape-rendering="crispEdges"/>
<path d="M955.5 298.5 H981.5 L990 307.25 L981.5 316.0 H955.5Z" stroke="#0000ff" fill="none"/>
<path d="M990 307.5 L1091 307.5" stroke="#0000ff" fill="none" shape-rendering="crispEdges"/>
<rect x="1047.0" y="304.0" width="7" height="7" fill="#0000ff" shape-rendering="crispEdges"/>
<path d="M1091.5 298.5 H1117.5 L1126 307.0 L1117.5 315.5 H1091.5Z" stroke="#0000ff" fill="none"/>
<path d="M1050.5 307.5 L1050.5 321.5" stroke="#0000ff" fill="none" shape-rendering="crispEdges"/>
<path d="M1050.5 321.5 L1060.5 327.0 L1040.5 337.5 L1060.5 347.5 L1040.5 357.5 L1050.5 362.5" stroke="#000080" fill="none" />
<path d="M1050.5 362.5 L1050.5 377.5" stroke="#0000ff" fill="none" shape-rendering="crispEdges"/>
<path d="M1039.0 377.5 H1062.0 L1050.5 389.5Z" stroke="#0000ff" fill="none"/>
<path d="M957.5 409.5 H981.5 L990 418.25 L981.5 427.0 H957.5Z" stroke="#0000ff" fill="none"/>
<path d="M990 418.5 L1091 418.5" stroke="#0000ff" fill="none" shape-rendering="crispEdges"/>
<rect x="1047.0" y="415.0" width="7" height="7" fill="#0000ff" shape-rendering="crispEdges"/>
<path d="M1091.5 409.5 H1115.5 L1124 418.0 L1115.5 426.5 H1091.5Z" stroke="#0000ff" fill="none"/>
<path d="M1050.5 418.5 L1050.5 432.5" stroke="#0000ff" fill="none" shape-rendering="crispEdges"/>
<path d="M1050.5 432.5 L1060.5 438.0 L1040.5 448.5 L1060.5 458.5 L1040.5 468.5 L1050.5 473.5" stroke="#000080" fill="none" />
<path d="M1050.5 473.5 L1050.5 488.5" stroke="#0000ff" fill="none" shape-rendering="crispEdges"/>
<path d="M1039.0 488.5 H1062.0 L1050.5 500.5Z" stroke="#0000ff" fill="none"/>
<path d="M738.5 540 L738.5 529.5 L768.5 529.5 L768.5 540" stroke="#0000ff" fill="none" shape-rendering="crispEdges"/>
<path d="M919.5 540V530.5H943L952 539" stroke="#0000ff" fill="none"/>
<rect x="922" y="534" width="3" height="2" fill="#000"/><rect x="929" y="533" width="3" height="2" fill="#000"/>
</g>
</svg>
  </div>
</div>

<!-- plot window (inactive) -->
<div class="a win" style="top:548px;height:430px;background:linear-gradient(#bccbdb 0,#c2d0de 12px,#d3e1ef 32px,#d7e5f2 36px);box-shadow:inset 0 1px 0 #e6eef6;border-color:#3c3c3c #4a4a4a #555 #3c3c3c">
  <svg class="a" style="left:10px;top:10px" width="20" height="20">
    <rect x="1" y="0" width="18" height="18" fill="#c4c4c4"/>
    <path d="M1.5 0V19.5H19" stroke="#000" fill="none"/>
    <path d="M0 2h1.5M0 5h1.5M0 8h1.5M0 11h1.5M0 14h1.5M0 17h1.5M4.5 19.5v1M7.5 19.5v1M10.5 19.5v1M13.5 19.5v1M16.5 19.5v1" stroke="#000"/>
    <path d="M1.5 6 L5 2 L8.5 6 L12 2 L17.5 6" stroke="#2020e0" stroke-width="1.2" fill="none"/>
    <path d="M2 10 L5 9 L8 10.5 L11 11.5 L14 11.5 L17.5 10" stroke="#f03030" stroke-width="1.6" fill="none"/>
    <path d="M2 16 L6 16 L7 17 L9 16 L13 16 L14 17 L17.5 17" stroke="#2020a0" stroke-width="1.4" fill="none"/>
  </svg>
  <div class="a ttl" style="top:14px;color:#3e4a58">Mono-Coil-VLF-V1.0par5res.asc</div>
  <div class="a btn" style="left:1542px;top:11px;border-color:#8d9db5;background:linear-gradient(#d3e0ee,#c9d8e9 45%,#bfd0e4 50%,#c8d8ea)"><div class="a" style="left:11px;top:9px;width:13px;height:6px;background:#f6f6f6;border:1px solid #5a6070;border-radius:1px"></div></div>
  <div class="a btn" style="left:1583px;top:11px;border-color:#8d9db5;background:linear-gradient(#d3e0ee,#c9d8e9 45%,#bfd0e4 50%,#c8d8ea)"><div class="a" style="left:13px;top:4px;width:12px;height:12px;background:#f2f2f2;border:1px solid #5a6070;border-radius:1px"><div class="a" style="left:2px;top:2px;width:6px;height:6px;border:1px solid #5a6070;background:#c0cfe0"></div></div></div>
  <div class="a btn" style="left:1624px;top:11px;border-color:#8d9db5;background:linear-gradient(#d3e0ee,#c9d8e9 45%,#bfd0e4 50%,#c8d8ea)">
    <svg class="a" style="left:11px;top:2px" width="16" height="15"><path d="M3.5 3 L12.5 12 M12.5 3 L3.5 12" stroke="#525a66" stroke-width="4.6" stroke-linecap="round"/><path d="M3.5 3 L12.5 12 M12.5 3 L3.5 12" stroke="#f4f4f4" stroke-width="2.6" stroke-linecap="round"/></svg>
  </div>
  <div class="a cont" style="top:35px;background:#000">
    <div class="a" style="left:-13px;top:-586px;width:1680px;height:1002px">
<svg class="a" style="left:0;top:0" width="1680" height="1002">
<g stroke="#bdbdbd" stroke-width="1" fill="none" shape-rendering="crispEdges">
<path d="M65.5 607.5H1608.5M65.5 607.5V946.5M1608.5 607.5V946.5M65.5 937.5H1608.5"/>
<path d="M56.5 607.5H65.5M1608.5 607.5H1617.5"/>
<path d="M65.5 937.5V946.5"/>
<path d="M56.5 640.5H65.5M1608.5 640.5H1617.5"/>
<path d="M219.5 937.5V946.5"/>
<path d="M56.5 673.5H65.5M1608.5 673.5H1617.5"/>
<path d="M374.5 937.5V946.5"/>
<path d="M56.5 706.5H65.5M1608.5 706.5H1617.5"/>
<path d="M528.5 937.5V946.5"/>
<path d="M56.5 739.5H65.5M1608.5 739.5H1617.5"/>
<path d="M682.5 937.5V946.5"/>
<path d="M56.5 772.5H65.5M1608.5 772.5H1617.5"/>
<path d="M837.5 937.5V946.5"/>
<path d="M56.5 805.5H65.5M1608.5 805.5H1617.5"/>
<path d="M991.5 937.5V946.5"/>
<path d="M56.5 838.5H65.5M1608.5 838.5H1617.5"/>
<path d="M1145.5 937.5V946.5"/>
<path d="M56.5 871.5H65.5M1608.5 871.5H1617.5"/>
<path d="M1299.5 937.5V946.5"/>
<path d="M56.5 904.5H65.5M1608.5 904.5H1617.5"/>
<path d="M1454.5 937.5V946.5"/>
<path d="M56.5 937.5H65.5M1608.5 937.5H1617.5"/>
<path d="M1608.5 937.5V946.5"/>
</g>
<g fill="#bdbdbd" style="font-family:'Liberation Sans';font-weight:bold;font-size:16px">
<text x="57" y="612.8" text-anchor="end" textLength="44.9" lengthAdjust="spacingAndGlyphs">50mA</text>
<text x="1660" y="612.8" text-anchor="end" textLength="35.1" lengthAdjust="spacingAndGlyphs">100°</text>
<text x="65.5" y="961" text-anchor="middle" textLength="52.3" lengthAdjust="spacingAndGlyphs">41KHz</text>
<text x="57" y="645.8" text-anchor="end" textLength="44.9" lengthAdjust="spacingAndGlyphs">45mA</text>
<text x="1660" y="645.8" text-anchor="end" textLength="25.7" lengthAdjust="spacingAndGlyphs">80°</text>
<text x="219.8" y="961" text-anchor="middle" textLength="52.3" lengthAdjust="spacingAndGlyphs">42KHz</text>
<text x="57" y="678.8" text-anchor="end" textLength="44.9" lengthAdjust="spacingAndGlyphs">40mA</text>
<text x="1660" y="678.8" text-anchor="end" textLength="25.7" lengthAdjust="spacingAndGlyphs">60°</text>
<text x="374.1" y="961" text-anchor="middle" textLength="52.3" lengthAdjust="spacingAndGlyphs">43KHz</text>
<text x="57" y="711.8" text-anchor="end" textLength="44.9" lengthAdjust="spacingAndGlyphs">35mA</text>
<text x="1660" y="711.8" text-anchor="end" textLength="25.7" lengthAdjust="spacingAndGlyphs">40°</text>
<text x="528.4" y="961" text-anchor="middle" textLength="52.3" lengthAdjust="spacingAndGlyphs">44KHz</text>
<text x="57" y="744.8" text-anchor="end" textLength="44.9" lengthAdjust="spacingAndGlyphs">30mA</text>
<text x="1660" y="744.8" text-anchor="end" textLength="25.7" lengthAdjust="spacingAndGlyphs">20°</text>
<text x="682.7" y="961" text-anchor="middle" textLength="52.3" lengthAdjust="spacingAndGlyphs">45KHz</text>
<text x="57" y="777.8" text-anchor="end" textLength="44.9" lengthAdjust="spacingAndGlyphs">25mA</text>
<text x="1660" y="777.8" text-anchor="end" textLength="16.2" lengthAdjust="spacingAndGlyphs">0°</text>
<text x="837.0" y="961" text-anchor="middle" textLength="52.3" lengthAdjust="spacingAndGlyphs">46KHz</text>
<text x="57" y="810.8" text-anchor="end" textLength="44.9" lengthAdjust="spacingAndGlyphs">20mA</text>
<text x="1660" y="810.8" text-anchor="end" textLength="31.3" lengthAdjust="spacingAndGlyphs">-20°</text>
<text x="991.3" y="961" text-anchor="middle" textLength="52.3" lengthAdjust="spacingAndGlyphs">47KHz</text>
<text x="57" y="843.8" text-anchor="end" textLength="44.9" lengthAdjust="spacingAndGlyphs">15mA</text>
<text x="1660" y="843.8" text-anchor="end" textLength="31.3" lengthAdjust="spacingAndGlyphs">-40°</text>
<text x="1145.6" y="961" text-anchor="middle" textLength="52.3" lengthAdjust="spacingAndGlyphs">48KHz</text>
<text x="57" y="876.8" text-anchor="end" textLength="44.9" lengthAdjust="spacingAndGlyphs">10mA</text>
<text x="1660" y="876.8" text-anchor="end" textLength="31.3" lengthAdjust="spacingAndGlyphs">-60°</text>
<text x="1299.9" y="961" text-anchor="middle" textLength="52.3" lengthAdjust="spacingAndGlyphs">49KHz</text>
<text x="57" y="909.8" text-anchor="end" textLength="35.7" lengthAdjust="spacingAndGlyphs">5mA</text>
<text x="1660" y="909.8" text-anchor="end" textLength="31.3" lengthAdjust="spacingAndGlyphs">-80°</text>
<text x="1454.2" y="961" text-anchor="middle" textLength="52.3" lengthAdjust="spacingAndGlyphs">50KHz</text>
<text x="57" y="942.8" text-anchor="end" textLength="35.7" lengthAdjust="spacingAndGlyphs">0mA</text>
<text x="1660" y="942.8" text-anchor="end" textLength="40.7" lengthAdjust="spacingAndGlyphs">-100°</text>
<text x="1608.5" y="961" text-anchor="middle" textLength="52.3" lengthAdjust="spacingAndGlyphs">51KHz</text>
</g>
<text x="836" y="601" text-anchor="middle" fill="#ff0000" style="font-family:'Liberation Sans';font-weight:bold;font-size:16px" textLength="41.8" lengthAdjust="spacingAndGlyphs">I(Ltx)</text>
<polyline fill="none" stroke="#ff0000" stroke-width="1" shape-rendering="crispEdges" points="65.50,933.50 66.00,933.50 66.50,933.49 67.00,933.49 67.50,933.49 68.00,933.49 68.50,933.48 69.00,933.48 69.50,933.48 70.00,933.47 70.50,933.47 71.00,933.47 71.50,933.47 72.00,933.46 72.50,933.46 73.00,933.46 73.50,933.46 74.00,933.45 74.50,933.45 75.00,933.45 75.50,933.44 76.00,933.44 76.50,933.44 77.00,933.44 77.50,933.43 78.00,933.43 78.50,933.43 79.00,933.42 79.50,933.42 80.00,933.42 80.50,933.42 81.00,933.41 81.50,933.41 82.00,933.41 82.50,933.40 83.00,933.40 83.50,933.40 84.00,933.40 84.50,933.39 85.00,933.39 85.50,933.39 86.00,933.38 86.50,933.38 87.00,933.38 87.50,933.38 88.00,933.37 88.50,933.37 89.00,933.37 89.50,933.36 90.00,933.36 90.50,933.36 91.00,933.35 91.50,933.35 92.00,933.35 92.50,933.35 93.00,933.34 93.50,933.34 94.00,933.34 94.50,933.33 95.00,933.33 95.50,933.33 96.00,933.33 96.50,933.32 97.00,933.32 97.50,933.32 98.00,933.31 98.50,933.31 99.00,933.31 99.50,933.30 100.00,933.30 100.50,933.30 101.00,933.30 101.50,933.29 102.00,933.29 102.50,933.29 103.00,933.28 103.50,933.28 104.00,933.28 104.50,933.27 105.00,933.27 105.50,933.27 106.00,933.26 106.50,933.26 107.00,933.26 107.50,933.26 108.00,933.25 108.50,933.25 109.00,933.25 109.50,933.24 110.00,933.24 110.50,933.24 111.00,933.23 111.50,933.23 112.00,933.23 112.50,933.22 113.00,933.22 113.50,933.22 114.00,933.22 114.50,933.21 115.00,933.21 115.50,933.21 116.00,933.20 116.50,933.20 117.00,933.20 117.50,933.19 118.00,933.19 118.50,933.19 119.00,933.18 119.50,933.18 120.00,933.18 120.50,933.17 121.00,933.17 121.50,933.17 122.00,933.16 122.50,933.16 123.00,933.16 123.50,933.15 124.00,933.15 124.50,933.15 125.00,933.15 125.50,933.14 126.00,933.14 126.50,933.14 127.00,933.13 127.50,933.13 128.00,933.13 128.50,933.12 129.00,933.12 129.50,933.12 130.00,933.11 130.50,933.11 131.00,933.11 131.50,933.10 132.00,933.10 132.50,933.10 133.00,933.09 133.50,933.09 134.00,933.09 134.50,933.08 135.00,933.08 135.50,933.08 136.00,933.07 136.50,933.07 137.00,933.07 137.50,933.06 138.00,933.06 138.50,933.06 139.00,933.05 139.50,933.05 140.00,933.05 140.50,933.04 141.00,933.04 141.50,933.04 142.00,933.03 142.50,933.03 143.00,933.03 143.50,933.02 144.00,933.02 144.50,933.02 145.00,933.01 145.50,933.01 146.00,933.01 146.50,933.00 147.00,933.00 147.50,933.00 148.00,932.99 148.50,932.99 149.00,932.99 149.50,932.98 150.00,932.98 150.50,932.97 151.00,932.97 151.50,932.97 152.00,932.96 152.50,932.96 153.00,932.96 153.50,932.95 154.00,932.95 154.50,932.95 155.00,932.94 155.50,932.94 156.00,932.94 156.50,932.93 157.00,932.93 157.50,932.93 158.00,932.92 158.50,932.92 159.00,932.92 159.50,932.91 160.00,932.91 160.50,932.90 161.00,932.90 161.50,932.90 162.00,932.89 162.50,932.89 163.00,932.89 163.50,932.88 164.00,932.88 164.50,932.88 165.00,932.87 165.50,932.87 166.00,932.86 166.50,932.86 167.00,932.86 167.50,932.85 168.00,932.85 168.50,932.85 169.00,932.84 169.50,932.84 170.00,932.84 170.50,932.83 171.00,932.83 171.50,932.82 172.00,932.82 172.50,932.82 173.00,932.81 173.50,932.81 174.00,932.81 174.50,932.80 175.00,932.80 175.50,932.80 176.00,932.79 176.50,932.79 177.00,932.78 177.50,932.78 178.00,932.78 178.50,932.77 179.00,932.77 179.50,932.76 180.00,932.76 180.50,932.76 181.00,932.75 181.50,932.75 182.00,932.75 182.50,932.74 183.00,932.74 183.50,932.73 184.00,932.73 184.50,932.73 185.00,932.72 185.50,932.72 186.00,932.72 186.50,932.71 187.00,932.71 187.50,932.70 188.00,932.70 188.50,932.70 189.00,932.69 189.50,932.69 190.00,932.68 190.50,932.68 191.00,932.68 191.50,932.67 192.00,932.67 192.50,932.66 193.00,932.66 193.50,932.66 194.00,932.65 194.50,932.65 195.00,932.65 195.50,932.64 196.00,932.64 196.50,932.63 197.00,932.63 197.50,932.63 198.00,932.62 198.50,932.62 199.00,932.61 199.50,932.61 200.00,932.61 200.50,932.60 201.00,932.60 201.50,932.59 202.00,932.59 202.50,932.59 203.00,932.58 203.50,932.58 204.00,932.57 204.50,932.57 205.00,932.56 205.50,932.56 206.00,932.56 206.50,932.55 207.00,932.55 207.50,932.54 208.00,932.54 208.50,932.54 209.00,932.53 209.50,932.53 210.00,932.52 210.50,932.52 211.00,932.52 211.50,932.51 212.00,932.51 212.50,932.50 213.00,932.50 213.50,932.49 214.00,932.49 214.50,932.49 215.00,932.48 215.50,932.48 216.00,932.47 216.50,932.47 217.00,932.46 217.50,932.46 218.00,932.46 218.50,932.45 219.00,932.45 219.50,932.44 220.00,932.44 220.50,932.43 221.00,932.43 221.50,932.43 222.00,932.42 222.50,932.42 223.00,932.41 223.50,932.41 224.00,932.40 224.50,932.40 225.00,932.40 225.50,932.39 226.00,932.39 226.50,932.38 227.00,932.38 227.50,932.37 228.00,932.37 228.50,932.37 229.00,932.36 229.50,932.36 230.00,932.35 230.50,932.35 231.00,932.34 231.50,932.34 232.00,932.33 232.50,932.33 233.00,932.33 233.50,932.32 234.00,932.32 234.50,932.31 235.00,932.31 235.50,932.30 236.00,932.30 236.50,932.29 237.00,932.29 237.50,932.28 238.00,932.28 238.50,932.28 239.00,932.27 239.50,932.27 240.00,932.26 240.50,932.26 241.00,932.25 241.50,932.25 242.00,932.24 242.50,932.24 243.00,932.23 243.50,932.23 244.00,932.23 244.50,932.22 245.00,932.22 245.50,932.21 246.00,932.21 246.50,932.20 247.00,932.20 247.50,932.19 248.00,932.19 248.50,932.18 249.00,932.18 249.50,932.17 250.00,932.17 250.50,932.16 251.00,932.16 251.50,932.15 252.00,932.15 252.50,932.15 253.00,932.14 253.50,932.14 254.00,932.13 254.50,932.13 255.00,932.12 255.50,932.12 256.00,932.11 256.50,932.11 257.00,932.10 257.50,932.10 258.00,932.09 258.50,932.09 259.00,932.08 259.50,932.08 260.00,932.07 260.50,932.07 261.00,932.06 261.50,932.06 262.00,932.05 262.50,932.05 263.00,932.04 263.50,932.04 264.00,932.03 264.50,932.03 265.00,932.02 265.50,932.02 266.00,932.01 266.50,932.01 267.00,932.00 267.50,932.00 268.00,931.99 268.50,931.99 269.00,931.98 269.50,931.98 270.00,931.97 270.50,931.97 271.00,931.96 271.50,931.96 272.00,931.95 272.50,931.95 273.00,931.94 273.50,931.94 274.00,931.93 274.50,931.93 275.00,931.92 275.50,931.92 276.00,931.91 276.50,931.91 277.00,931.90 277.50,931.90 278.00,931.89 278.50,931.89 279.00,931.88 279.50,931.88 280.00,931.87 280.50,931.86 281.00,931.86 281.50,931.85 282.00,931.85 282.50,931.84 283.00,931.84 283.50,931.83 284.00,931.83 284.50,931.82 285.00,931.82 285.50,931.81 286.00,931.81 286.50,931.80 287.00,931.80 287.50,931.79 288.00,931.79 288.50,931.78 289.00,931.77 289.50,931.77 290.00,931.76 290.50,931.76 291.00,931.75 291.50,931.75 292.00,931.74 292.50,931.74 293.00,931.73 293.50,931.73 294.00,931.72 294.50,931.71 295.00,931.71 295.50,931.70 296.00,931.70 296.50,931.69 297.00,931.69 297.50,931.68 298.00,931.68 298.50,931.67 299.00,931.66 299.50,931.66 300.00,931.65 300.50,931.65 301.00,931.64 301.50,931.64 302.00,931.63 302.50,931.62 303.00,931.62 303.50,931.61 304.00,931.61 304.50,931.60 305.00,931.60 305.50,931.59 306.00,931.58 306.50,931.58 307.00,931.57 307.50,931.57 308.00,931.56 308.50,931.56 309.00,931.55 309.50,931.54 310.00,931.54 310.50,931.53 311.00,931.53 311.50,931.52 312.00,931.51 312.50,931.51 313.00,931.50 313.50,931.50 314.00,931.49 314.50,931.48 315.00,931.48 315.50,931.47 316.00,931.47 316.50,931.46 317.00,931.45 317.50,931.45 318.00,931.44 318.50,931.44 319.00,931.43 319.50,931.42 320.00,931.42 320.50,931.41 321.00,931.41 321.50,931.40 322.00,931.39 322.50,931.39 323.00,931.38 323.50,931.38 324.00,931.37 324.50,931.36 325.00,931.36 325.50,931.35 326.00,931.34 326.50,931.34 327.00,931.33 327.50,931.33 328.00,931.32 328.50,931.31 329.00,931.31 329.50,931.30 330.00,931.29 330.50,931.29 331.00,931.28 331.50,931.28 332.00,931.27 332.50,931.26 333.00,931.26 333.50,931.25 334.00,931.24 334.50,931.24 335.00,931.23 335.50,931.22 336.00,931.22 336.50,931.21 337.00,931.20 337.50,931.20 338.00,931.19 338.50,931.18 339.00,931.18 339.50,931.17 340.00,931.17 340.50,931.16 341.00,931.15 341.50,931.15 342.00,931.14 342.50,931.13 343.00,931.13 343.50,931.12 344.00,931.11 344.50,931.11 345.00,931.10 345.50,931.09 346.00,931.09 346.50,931.08 347.00,931.07 347.50,931.06 348.00,931.06 348.50,931.05 349.00,931.04 349.50,931.04 350.00,931.03 350.50,931.02 351.00,931.02 351.50,931.01 352.00,931.00 352.50,931.00 353.00,930.99 353.50,930.98 354.00,930.98 354.50,930.97 355.00,930.96 355.50,930.95 356.00,930.95 356.50,930.94 357.00,930.93 357.50,930.93 358.00,930.92 358.50,930.91 359.00,930.91 359.50,930.90 360.00,930.89 360.50,930.88 361.00,930.88 361.50,930.87 362.00,930.86 362.50,930.86 363.00,930.85 363.50,930.84 364.00,930.83 364.50,930.83 365.00,930.82 365.50,930.81 366.00,930.80 366.50,930.80 367.00,930.79 367.50,930.78 368.00,930.77 368.50,930.77 369.00,930.76 369.50,930.75 370.00,930.75 370.50,930.74 371.00,930.73 371.50,930.72 372.00,930.72 372.50,930.71 373.00,930.70 373.50,930.69 374.00,930.69 374.50,930.68 375.00,930.67 375.50,930.66 376.00,930.65 376.50,930.65 377.00,930.64 377.50,930.63 378.00,930.62 378.50,930.62 379.00,930.61 379.50,930.60 380.00,930.59 380.50,930.59 381.00,930.58 381.50,930.57 382.00,930.56 382.50,930.55 383.00,930.55 383.50,930.54 384.00,930.53 384.50,930.52 385.00,930.51 385.50,930.51 386.00,930.50 386.50,930.49 387.00,930.48 387.50,930.47 388.00,930.47 388.50,930.46 389.00,930.45 389.50,930.44 390.00,930.43 390.50,930.43 391.00,930.42 391.50,930.41 392.00,930.40 392.50,930.39 393.00,930.39 393.50,930.38 394.00,930.37 394.50,930.36 395.00,930.35 395.50,930.34 396.00,930.34 396.50,930.33 397.00,930.32 397.50,930.31 398.00,930.30 398.50,930.29 399.00,930.28 399.50,930.28 400.00,930.27 400.50,930.26 401.00,930.25 401.50,930.24 402.00,930.23 402.50,930.23 403.00,930.22 403.50,930.21 404.00,930.20 404.50,930.19 405.00,930.18 405.50,930.17 406.00,930.16 406.50,930.16 407.00,930.15 407.50,930.14 408.00,930.13 408.50,930.12 409.00,930.11 409.50,930.10 410.00,930.09 410.50,930.09 411.00,930.08 411.50,930.07 412.00,930.06 412.50,930.05 413.00,930.04 413.50,930.03 414.00,930.02 414.50,930.01 415.00,930.00 415.50,930.00 416.00,929.99 416.50,929.98 417.00,929.97 417.50,929.96 418.00,929.95 418.50,929.94 419.00,929.93 419.50,929.92 420.00,929.91 420.50,929.90 421.00,929.89 421.50,929.88 422.00,929.87 422.50,929.87 423.00,929.86 423.50,929.85 424.00,929.84 424.50,929.83 425.00,929.82 425.50,929.81 426.00,929.80 426.50,929.79 427.00,929.78 427.50,929.77 428.00,929.76 428.50,929.75 429.00,929.74 429.50,929.73 430.00,929.72 430.50,929.71 431.00,929.70 431.50,929.69 432.00,929.68 432.50,929.67 433.00,929.66 433.50,929.65 434.00,929.64 434.50,929.63 435.00,929.62 435.50,929.61 436.00,929.60 436.50,929.59 437.00,929.58 437.50,929.57 438.00,929.56 438.50,929.55 439.00,929.54 439.50,929.53 440.00,929.52 440.50,929.51 441.00,929.50 441.50,929.49 442.00,929.48 442.50,929.47 443.00,929.46 443.50,929.45 444.00,929.44 444.50,929.43 445.00,929.42 445.50,929.41 446.00,929.40 446.50,929.39 447.00,929.37 447.50,929.36 448.00,929.35 448.50,929.34 449.00,929.33 449.50,929.32 450.00,929.31 450.50,929.30 451.00,929.29 451.50,929.28 452.00,929.27 452.50,929.26 453.00,929.24 453.50,929.23 454.00,929.22 454.50,929.21 455.00,929.20 455.50,929.19 456.00,929.18 456.50,929.17 457.00,929.16 457.50,929.14 458.00,929.13 458.50,929.12 459.00,929.11 459.50,929.10 460.00,929.09 460.50,929.08 461.00,929.07 461.50,929.05 462.00,929.04 462.50,929.03 463.00,929.02 463.50,929.01 464.00,929.00 464.50,928.98 465.00,928.97 465.50,928.96 466.00,928.95 466.50,928.94 467.00,928.93 467.50,928.91 468.00,928.90 468.50,928.89 469.00,928.88 469.50,928.87 470.00,928.85 470.50,928.84 471.00,928.83 471.50,928.82 472.00,928.81 472.50,928.79 473.00,928.78 473.50,928.77 474.00,928.76 474.50,928.75 475.00,928.73 475.50,928.72 476.00,928.71 476.50,928.70 477.00,928.68 477.50,928.67 478.00,928.66 478.50,928.65 479.00,928.63 479.50,928.62 480.00,928.61 480.50,928.60 481.00,928.58 481.50,928.57 482.00,928.56 482.50,928.54 483.00,928.53 483.50,928.52 484.00,928.51 484.50,928.49 485.00,928.48 485.50,928.47 486.00,928.45 486.50,928.44 487.00,928.43 487.50,928.41 488.00,928.40 488.50,928.39 489.00,928.37 489.50,928.36 490.00,928.35 490.50,928.33 491.00,928.32 491.50,928.31 492.00,928.29 492.50,928.28 493.00,928.27 493.50,928.25 494.00,928.24 494.50,928.23 495.00,928.21 495.50,928.20 496.00,928.18 496.50,928.17 497.00,928.16 497.50,928.14 498.00,928.13 498.50,928.11 499.00,928.10 499.50,928.09 500.00,928.07 500.50,928.06 501.00,928.04 501.50,928.03 502.00,928.01 502.50,928.00 503.00,927.99 503.50,927.97 504.00,927.96 504.50,927.94 505.00,927.93 505.50,927.91 506.00,927.90 506.50,927.88 507.00,927.87 507.50,927.85 508.00,927.84 508.50,927.82 509.00,927.81 509.50,927.79 510.00,927.78 510.50,927.76 511.00,927.75 511.50,927.73 512.00,927.72 512.50,927.70 513.00,927.69 513.50,927.67 514.00,927.66 514.50,927.64 515.00,927.63 515.50,927.61 516.00,927.59 516.50,927.58 517.00,927.56 517.50,927.55 518.00,927.53 518.50,927.52 519.00,927.50 519.50,927.48 520.00,927.47 520.50,927.45 521.00,927.44 521.50,927.42 522.00,927.40 522.50,927.39 523.00,927.37 523.50,927.35 524.00,927.34 524.50,927.32 525.00,927.30 525.50,927.29 526.00,927.27 526.50,927.25 527.00,927.24 527.50,927.22 528.00,927.20 528.50,927.19 529.00,927.17 529.50,927.15 530.00,927.14 530.50,927.12 531.00,927.10 531.50,927.08 532.00,927.07 532.50,927.05 533.00,927.03 533.50,927.02 534.00,927.00 534.50,926.98 535.00,926.96 535.50,926.95 536.00,926.93 536.50,926.91 537.00,926.89 537.50,926.87 538.00,926.86 538.50,926.84 539.00,926.82 539.50,926.80 540.00,926.78 540.50,926.77 541.00,926.75 541.50,926.73 542.00,926.71 542.50,926.69 543.00,926.67 543.50,926.65 544.00,926.64 544.50,926.62 545.00,926.60 545.50,926.58 546.00,926.56 546.50,926.54 547.00,926.52 547.50,926.50 548.00,926.48 548.50,926.46 549.00,926.45 549.50,926.43 550.00,926.41 550.50,926.39 551.00,926.37 551.50,926.35 552.00,926.33 552.50,926.31 553.00,926.29 553.50,926.27 554.00,926.25 554.50,926.23 555.00,926.21 555.50,926.19 556.00,926.17 556.50,926.15 557.00,926.13 557.50,926.11 558.00,926.09 558.50,926.06 559.00,926.04 559.50,926.02 560.00,926.00 560.50,925.98 561.00,925.96 561.50,925.94 562.00,925.92 562.50,925.90 563.00,925.87 563.50,925.85 564.00,925.83 564.50,925.81 565.00,925.79 565.50,925.77 566.00,925.75 566.50,925.72 567.00,925.70 567.50,925.68 568.00,925.66 568.50,925.64 569.00,925.61 569.50,925.59 570.00,925.57 570.50,925.55 571.00,925.52 571.50,925.50 572.00,925.48 572.50,925.45 573.00,925.43 573.50,925.41 574.00,925.39 574.50,925.36 575.00,925.34 575.50,925.32 576.00,925.29 576.50,925.27 577.00,925.24 577.50,925.22 578.00,925.20 578.50,925.17 579.00,925.15 579.50,925.12 580.00,925.10 580.50,925.08 581.00,925.05 581.50,925.03 582.00,925.00 582.50,924.98 583.00,924.95 583.50,924.93 584.00,924.90 584.50,924.88 585.00,924.85 585.50,924.83 586.00,924.80 586.50,924.78 587.00,924.75 587.50,924.73 588.00,924.70 588.50,924.67 589.00,924.65 589.50,924.62 590.00,924.60 590.50,924.57 591.00,924.54 591.50,924.52 592.00,924.49 592.50,924.46 593.00,924.44 593.50,924.41 594.00,924.38 594.50,924.36 595.00,924.33 595.50,924.30 596.00,924.27 596.50,924.25 597.00,924.22 597.50,924.19 598.00,924.16 598.50,924.13 599.00,924.11 599.50,924.08 600.00,924.05 600.50,924.02 601.00,923.99 601.50,923.96 602.00,923.93 602.50,923.91 603.00,923.88 603.50,923.85 604.00,923.82 604.50,923.79 605.00,923.76 605.50,923.73 606.00,923.70 606.50,923.67 607.00,923.64 607.50,923.61 608.00,923.58 608.50,923.55 609.00,923.52 609.50,923.49 610.00,923.46 610.50,923.42 611.00,923.39 611.50,923.36 612.00,923.33 612.50,923.30 613.00,923.27 613.50,923.24 614.00,923.20 614.50,923.17 615.00,923.14 615.50,923.11 616.00,923.07 616.50,923.04 617.00,923.01 617.50,922.98 618.00,922.94 618.50,922.91 619.00,922.88 619.50,922.84 620.00,922.81 620.50,922.77 621.00,922.74 621.50,922.71 622.00,922.67 622.50,922.64 623.00,922.60 623.50,922.57 624.00,922.53 624.50,922.50 625.00,922.46 625.50,922.43 626.00,922.39 626.50,922.35 627.00,922.32 627.50,922.28 628.00,922.25 628.50,922.21 629.00,922.17 629.50,922.14 630.00,922.10 630.50,922.06 631.00,922.02 631.50,921.99 632.00,921.95 632.50,921.91 633.00,921.87 633.50,921.83 634.00,921.80 634.50,921.76 635.00,921.72 635.50,921.68 636.00,921.64 636.50,921.60 637.00,921.56 637.50,921.52 638.00,921.48 638.50,921.44 639.00,921.40 639.50,921.36 640.00,921.32 640.50,921.28 641.00,921.24 641.50,921.20 642.00,921.15 642.50,921.11 643.00,921.07 643.50,921.03 644.00,920.98 644.50,920.94 645.00,920.90 645.50,920.86 646.00,920.81 646.50,920.77 647.00,920.73 647.50,920.68 648.00,920.64 648.50,920.59 649.00,920.55 649.50,920.50 650.00,920.46 650.50,920.41 651.00,920.37 651.50,920.32 652.00,920.27 652.50,920.23 653.00,920.18 653.50,920.13 654.00,920.09 654.50,920.04 655.00,919.99 655.50,919.94 656.00,919.90 656.50,919.85 657.00,919.80 657.50,919.75 658.00,919.70 658.50,919.65 659.00,919.60 659.50,919.55 660.00,919.50 660.50,919.45 661.00,919.40 661.50,919.35 662.00,919.30 662.50,919.24 663.00,919.19 663.50,919.14 664.00,919.09 664.50,919.03 665.00,918.98 665.50,918.93 666.00,918.87 666.50,918.82 667.00,918.77 667.50,918.71 668.00,918.66 668.50,918.60 669.00,918.54 669.50,918.49 670.00,918.43 670.50,918.38 671.00,918.32 671.50,918.26 672.00,918.20 672.50,918.15 673.00,918.09 673.50,918.03 674.00,917.97 674.50,917.91 675.00,917.85 675.50,917.79 676.00,917.73 676.50,917.67 677.00,917.61 677.50,917.55 678.00,917.48 678.50,917.42 679.00,917.36 679.50,917.29 680.00,917.23 680.50,917.17 681.00,917.10 681.50,917.04 682.00,916.97 682.50,916.91 683.00,916.84 683.50,916.77 684.00,916.71 684.50,916.64 685.00,916.57 685.50,916.50 686.00,916.44 686.50,916.37 687.00,916.30 687.50,916.23 688.00,916.16 688.50,916.09 689.00,916.01 689.50,915.94 690.00,915.87 690.50,915.80 691.00,915.72 691.50,915.65 692.00,915.58 692.50,915.50 693.00,915.43 693.50,915.35 694.00,915.27 694.50,915.20 695.00,915.12 695.50,915.04 696.00,914.96 696.50,914.89 697.00,914.81 697.50,914.73 698.00,914.65 698.50,914.56 699.00,914.48 699.50,914.40 700.00,914.32 700.50,914.23 701.00,914.15 701.50,914.07 702.00,913.98 702.50,913.89 703.00,913.81 703.50,913.72 704.00,913.63 704.50,913.54 705.00,913.46 705.50,913.37 706.00,913.28 706.50,913.18 707.00,913.09 707.50,913.00 708.00,912.91 708.50,912.81 709.00,912.72 709.50,912.62 710.00,912.53 710.50,912.43 711.00,912.33 711.50,912.24 712.00,912.14 712.50,912.04 713.00,911.94 713.50,911.83 714.00,911.73 714.50,911.63 715.00,911.53 715.50,911.42 716.00,911.32 716.50,911.21 717.00,911.10 717.50,911.00 718.00,910.89 718.50,910.78 719.00,910.67 719.50,910.55 720.00,910.44 720.50,910.33 721.00,910.21 721.50,910.10 722.00,909.98 722.50,909.87 723.00,909.75 723.50,909.63 724.00,909.51 724.50,909.39 725.00,909.27 725.50,909.14 726.00,909.02 726.50,908.89 727.00,908.77 727.50,908.64 728.00,908.51 728.50,908.38 729.00,908.25 729.50,908.12 730.00,907.98 730.50,907.85 731.00,907.71 731.50,907.58 732.00,907.44 732.50,907.30 733.00,907.16 733.50,907.01 734.00,906.87 734.50,906.73 735.00,906.58 735.50,906.43 736.00,906.28 736.50,906.13 737.00,905.98 737.50,905.83 738.00,905.67 738.50,905.52 739.00,905.36 739.50,905.20 740.00,905.04 740.50,904.88 741.00,904.71 741.50,904.55 742.00,904.38 742.50,904.21 743.00,904.04 743.50,903.87 744.00,903.69 744.50,903.52 745.00,903.34 745.50,903.16 746.00,902.98 746.50,902.79 747.00,902.61 747.50,902.42 748.00,902.23 748.50,902.04 749.00,901.85 749.50,901.65 750.00,901.45 750.50,901.25 751.00,901.05 751.50,900.85 752.00,900.64 752.50,900.43 753.00,900.22 753.50,900.01 754.00,899.79 754.50,899.57 755.00,899.35 755.50,899.13 756.00,898.90 756.50,898.67 757.00,898.44 757.50,898.20 758.00,897.97 758.50,897.73 759.00,897.48 759.50,897.24 760.00,896.99 760.50,896.74 761.00,896.48 761.50,896.22 762.00,895.96 762.50,895.70 763.00,895.43 763.50,895.16 764.00,894.88 764.50,894.60 765.00,894.32 765.50,894.04 766.00,893.75 766.50,893.45 767.00,893.16 767.50,892.86 768.00,892.55 768.50,892.24 769.00,891.93 769.50,891.61 770.00,891.29 770.50,890.96 771.00,890.63 771.50,890.29 772.00,889.95 772.50,889.61 773.00,889.25 773.50,888.90 774.00,888.54 774.50,888.17 775.00,887.80 775.50,887.42 776.00,887.04 776.50,886.65 777.00,886.26 777.50,885.85 778.00,885.45 778.50,885.03 779.00,884.61 779.50,884.19 780.00,883.75 780.50,883.31 781.00,882.87 781.50,882.41 782.00,881.95 782.50,881.48 783.00,881.00 783.50,880.52 784.00,880.02 784.50,879.52 785.00,879.01 785.50,878.49 786.00,877.96 786.50,877.42 787.00,876.87 787.50,876.31 788.00,875.75 788.50,875.17 789.00,874.58 789.50,873.98 790.00,873.37 790.50,872.74 791.00,872.11 791.50,871.46 792.00,870.80 792.50,870.13 793.00,869.44 793.50,868.74 794.00,868.03 794.50,867.30 795.00,866.55 795.50,865.79 796.00,865.02 796.50,864.23 797.00,863.42 797.50,862.59 798.00,861.75 798.50,860.89 799.00,860.00 799.50,859.10 800.00,858.18 800.50,857.24 801.00,856.27 801.50,855.28 802.00,854.27 802.50,853.24 803.00,852.17 803.50,851.09 804.00,849.97 804.50,848.83 805.00,847.66 805.50,846.46 806.00,845.23 806.50,843.97 807.00,842.67 807.50,841.34 808.00,839.97 808.50,838.57 809.00,837.13 809.50,835.64 810.00,834.12 810.50,832.55 811.00,830.94 811.50,829.27 812.00,827.56 812.50,825.80 813.00,823.99 813.50,822.12 814.00,820.19 814.50,818.20 815.00,816.15 815.50,814.03 816.00,811.85 816.50,809.59 817.00,807.26 817.50,804.85 818.00,802.36 818.50,799.79 819.00,797.12 819.50,794.37 820.00,791.52 820.50,788.57 821.00,785.51 821.50,782.34 822.00,779.06 822.50,775.66 823.00,772.14 823.50,768.49 824.00,764.71 824.50,760.79 825.00,756.73 825.50,752.53 826.00,748.17 826.50,743.66 827.00,738.99 827.50,734.17 828.00,729.18 828.50,724.04 829.00,718.74 829.50,713.29 830.00,707.69 830.50,701.95 831.00,696.08 831.50,690.11 832.00,684.05 832.50,677.93 833.00,671.77 833.50,665.63 834.00,659.53 834.50,653.54 835.00,647.71 835.50,642.11 836.00,636.80 836.50,631.85 837.00,627.35 837.50,623.36 838.00,619.95 838.50,617.20 839.00,615.15 839.50,613.85 840.00,613.32 840.50,613.58 841.00,614.62 841.50,616.41 842.00,618.93 842.50,622.11 843.00,625.90 843.50,630.23 844.00,635.03 844.50,640.22 845.00,645.72 845.50,651.47 846.00,657.40 846.50,663.45 847.00,669.57 847.50,675.71 848.00,681.84 848.50,687.91 849.00,693.91 849.50,699.80 850.00,705.57 850.50,711.21 851.00,716.70 851.50,722.04 852.00,727.23 852.50,732.26 853.00,737.13 853.50,741.84 854.00,746.39 854.50,750.79 855.00,755.04 855.50,759.14 856.00,763.10 856.50,766.92 857.00,770.61 857.50,774.17 858.00,777.60 858.50,780.92 859.00,784.11 859.50,787.20 860.00,790.19 860.50,793.07 861.00,795.85 861.50,798.54 862.00,801.14 862.50,803.65 863.00,806.09 863.50,808.44 864.00,810.72 864.50,812.93 865.00,815.06 865.50,817.13 866.00,819.14 866.50,821.08 867.00,822.97 867.50,824.80 868.00,826.58 868.50,828.31 869.00,829.98 869.50,831.61 870.00,833.19 870.50,834.73 871.00,836.22 871.50,837.68 872.00,839.09 872.50,840.47 873.00,841.81 873.50,843.12 874.00,844.39 874.50,845.63 875.00,846.84 875.50,848.02 876.00,849.17 876.50,850.29 877.00,851.39 877.50,852.46 878.00,853.50 878.50,854.52 879.00,855.51 879.50,856.49 880.00,857.44 880.50,858.36 881.00,859.27 881.50,860.16 882.00,861.03 882.50,861.88 883.00,862.71 883.50,863.52 884.00,864.32 884.50,865.10 885.00,865.86 885.50,866.61 886.00,867.35 886.50,868.06 887.00,868.77 887.50,869.46 888.00,870.14 888.50,870.80 889.00,871.45 889.50,872.09 890.00,872.72 890.50,873.33 891.00,873.94 891.50,874.53 892.00,875.11 892.50,875.68 893.00,876.24 893.50,876.79 894.00,877.34 894.50,877.87 895.00,878.39 895.50,878.90 896.00,879.41 896.50,879.91 897.00,880.39 897.50,880.87 898.00,881.35 898.50,881.81 899.00,882.27 899.50,882.72 900.00,883.16 900.50,883.60 901.00,884.02 901.50,884.45 902.00,884.86 902.50,885.27 903.00,885.67 903.50,886.07 904.00,886.46 904.50,886.84 905.00,887.22 905.50,887.60 906.00,887.97 906.50,888.33 907.00,888.69 907.50,889.04 908.00,889.38 908.50,889.73 909.00,890.06 909.50,890.40 910.00,890.73 910.50,891.05 911.00,891.37 911.50,891.68 912.00,891.99 912.50,892.30 913.00,892.60 913.50,892.90 914.00,893.20 914.50,893.49 915.00,893.77 915.50,894.06 916.00,894.34 916.50,894.61 917.00,894.89 917.50,895.15 918.00,895.42 918.50,895.68 919.00,895.94 919.50,896.20 920.00,896.45 920.50,896.70 921.00,896.95 921.50,897.19 922.00,897.43 922.50,897.67 923.00,897.91 923.50,898.14 924.00,898.37 924.50,898.59 925.00,898.82 925.50,899.04 926.00,899.26 926.50,899.48 927.00,899.69 927.50,899.90 928.00,900.11 928.50,900.32 929.00,900.53 929.50,900.73 930.00,900.93 930.50,901.13 931.00,901.32 931.50,901.52 932.00,901.71 932.50,901.90 933.00,902.09 933.50,902.27 934.00,902.46 934.50,902.64 935.00,902.82 935.50,903.00 936.00,903.18 936.50,903.35 937.00,903.52 937.50,903.70 938.00,903.87 938.50,904.03 939.00,904.20 939.50,904.36 940.00,904.53 940.50,904.69 941.00,904.85 941.50,905.01 942.00,905.16 942.50,905.32 943.00,905.47 943.50,905.62 944.00,905.78 944.50,905.92 945.00,906.07 945.50,906.22 946.00,906.36 946.50,906.51 947.00,906.65 947.50,906.79 948.00,906.93 948.50,907.07 949.00,907.21 949.50,907.34 950.00,907.48 950.50,907.61 951.00,907.75 951.50,907.88 952.00,908.01 952.50,908.14 953.00,908.26 953.50,908.39 954.00,908.52 954.50,908.64 955.00,908.77 955.50,908.89 956.00,909.01 956.50,909.13 957.00,909.25 957.50,909.37 958.00,909.49 958.50,909.60 959.00,909.72 959.50,909.83 960.00,909.95 960.50,910.06 961.00,910.17 961.50,910.28 962.00,910.39 962.50,910.50 963.00,910.61 963.50,910.72 964.00,910.82 964.50,910.93 965.00,911.03 965.50,911.14 966.00,911.24 966.50,911.34 967.00,911.44 967.50,911.54 968.00,911.64 968.50,911.74 969.00,911.84 969.50,911.94 970.00,912.04 970.50,912.13 971.00,912.23 971.50,912.32 972.00,912.42 972.50,912.51 973.00,912.60 973.50,912.69 974.00,912.78 974.50,912.88 975.00,912.97 975.50,913.05 976.00,913.14 976.50,913.23 977.00,913.32 977.50,913.41 978.00,913.49 978.50,913.58 979.00,913.66 979.50,913.75 980.00,913.83 980.50,913.91 981.00,913.99 981.50,914.08 982.00,914.16 982.50,914.24 983.00,914.32 983.50,914.40 984.00,914.48 984.50,914.56 985.00,914.63 985.50,914.71 986.00,914.79 986.50,914.86 987.00,914.94 987.50,915.02 988.00,915.09 988.50,915.17 989.00,915.24 989.50,915.31 990.00,915.39 990.50,915.46 991.00,915.53 991.50,915.60 992.00,915.67 992.50,915.74 993.00,915.81 993.50,915.88 994.00,915.95 994.50,916.02 995.00,916.09 995.50,916.16 996.00,916.22 996.50,916.29 997.00,916.36 997.50,916.42 998.00,916.49 998.50,916.56 999.00,916.62 999.50,916.68 1000.00,916.75 1000.50,916.81 1001.00,916.88 1001.50,916.94 1002.00,917.00 1002.50,917.06 1003.00,917.13 1003.50,917.19 1004.00,917.25 1004.50,917.31 1005.00,917.37 1005.50,917.43 1006.00,917.49 1006.50,917.55 1007.00,917.61 1007.50,917.66 1008.00,917.72 1008.50,917.78 1009.00,917.84 1009.50,917.90 1010.00,917.95 1010.50,918.01 1011.00,918.06 1011.50,918.12 1012.00,918.18 1012.50,918.23 1013.00,918.29 1013.50,918.34 1014.00,918.39 1014.50,918.45 1015.00,918.50 1015.50,918.56 1016.00,918.61 1016.50,918.66 1017.00,918.71 1017.50,918.77 1018.00,918.82 1018.50,918.87 1019.00,918.92 1019.50,918.97 1020.00,919.02 1020.50,919.07 1021.00,919.12 1021.50,919.17 1022.00,919.22 1022.50,919.27 1023.00,919.32 1023.50,919.37 1024.00,919.42 1024.50,919.47 1025.00,919.51 1025.50,919.56 1026.00,919.61 1026.50,919.66 1027.00,919.70 1027.50,919.75 1028.00,919.80 1028.50,919.84 1029.00,919.89 1029.50,919.94 1030.00,919.98 1030.50,920.03 1031.00,920.07 1031.50,920.12 1032.00,920.16 1032.50,920.20 1033.00,920.25 1033.50,920.29 1034.00,920.34 1034.50,920.38 1035.00,920.42 1035.50,920.47 1036.00,920.51 1036.50,920.55 1037.00,920.59 1037.50,920.64 1038.00,920.68 1038.50,920.72 1039.00,920.76 1039.50,920.80 1040.00,920.84 1040.50,920.88 1041.00,920.92 1041.50,920.97 1042.00,921.01 1042.50,921.05 1043.00,921.09 1043.50,921.13 1044.00,921.16 1044.50,921.20 1045.00,921.24 1045.50,921.28 1046.00,921.32 1046.50,921.36 1047.00,921.40 1047.50,921.44 1048.00,921.47 1048.50,921.51 1049.00,921.55 1049.50,921.59 1050.00,921.62 1050.50,921.66 1051.00,921.70 1051.50,921.74 1052.00,921.77 1052.50,921.81 1053.00,921.84 1053.50,921.88 1054.00,921.92 1054.50,921.95 1055.00,921.99 1055.50,922.02 1056.00,922.06 1056.50,922.09 1057.00,922.13 1057.50,922.16 1058.00,922.20 1058.50,922.23 1059.00,922.27 1059.50,922.30 1060.00,922.33 1060.50,922.37 1061.00,922.40 1061.50,922.44 1062.00,922.47 1062.50,922.50 1063.00,922.54 1063.50,922.57 1064.00,922.60 1064.50,922.63 1065.00,922.67 1065.50,922.70 1066.00,922.73 1066.50,922.76 1067.00,922.79 1067.50,922.83 1068.00,922.86 1068.50,922.89 1069.00,922.92 1069.50,922.95 1070.00,922.98 1070.50,923.01 1071.00,923.04 1071.50,923.08 1072.00,923.11 1072.50,923.14 1073.00,923.17 1073.50,923.20 1074.00,923.23 1074.50,923.26 1075.00,923.29 1075.50,923.32 1076.00,923.35 1076.50,923.38 1077.00,923.40 1077.50,923.43 1078.00,923.46 1078.50,923.49 1079.00,923.52 1079.50,923.55 1080.00,923.58 1080.50,923.61 1081.00,923.63 1081.50,923.66 1082.00,923.69 1082.50,923.72 1083.00,923.75 1083.50,923.77 1084.00,923.80 1084.50,923.83 1085.00,923.86 1085.50,923.88 1086.00,923.91 1086.50,923.94 1087.00,923.97 1087.50,923.99 1088.00,924.02 1088.50,924.05 1089.00,924.07 1089.50,924.10 1090.00,924.12 1090.50,924.15 1091.00,924.18 1091.50,924.20 1092.00,924.23 1092.50,924.25 1093.00,924.28 1093.50,924.31 1094.00,924.33 1094.50,924.36 1095.00,924.38 1095.50,924.41 1096.00,924.43 1096.50,924.46 1097.00,924.48 1097.50,924.51 1098.00,924.53 1098.50,924.56 1099.00,924.58 1099.50,924.61 1100.00,924.63 1100.50,924.65 1101.00,924.68 1101.50,924.70 1102.00,924.73 1102.50,924.75 1103.00,924.77 1103.50,924.80 1104.00,924.82 1104.50,924.84 1105.00,924.87 1105.50,924.89 1106.00,924.91 1106.50,924.94 1107.00,924.96 1107.50,924.98 1108.00,925.01 1108.50,925.03 1109.00,925.05 1109.50,925.08 1110.00,925.10 1110.50,925.12 1111.00,925.14 1111.50,925.17 1112.00,925.19 1112.50,925.21 1113.00,925.23 1113.50,925.25 1114.00,925.28 1114.50,925.30 1115.00,925.32 1115.50,925.34 1116.00,925.36 1116.50,925.38 1117.00,925.41 1117.50,925.43 1118.00,925.45 1118.50,925.47 1119.00,925.49 1119.50,925.51 1120.00,925.53 1120.50,925.55 1121.00,925.57 1121.50,925.59 1122.00,925.62 1122.50,925.64 1123.00,925.66 1123.50,925.68 1124.00,925.70 1124.50,925.72 1125.00,925.74 1125.50,925.76 1126.00,925.78 1126.50,925.80 1127.00,925.82 1127.50,925.84 1128.00,925.86 1128.50,925.88 1129.00,925.90 1129.50,925.92 1130.00,925.94 1130.50,925.96 1131.00,925.98 1131.50,926.00 1132.00,926.01 1132.50,926.03 1133.00,926.05 1133.50,926.07 1134.00,926.09 1134.50,926.11 1135.00,926.13 1135.50,926.15 1136.00,926.17 1136.50,926.19 1137.00,926.20 1137.50,926.22 1138.00,926.24 1138.50,926.26 1139.00,926.28 1139.50,926.30 1140.00,926.31 1140.50,926.33 1141.00,926.35 1141.50,926.37 1142.00,926.39 1142.50,926.41 1143.00,926.42 1143.50,926.44 1144.00,926.46 1144.50,926.48 1145.00,926.49 1145.50,926.51 1146.00,926.53 1146.50,926.55 1147.00,926.56 1147.50,926.58 1148.00,926.60 1148.50,926.62 1149.00,926.63 1149.50,926.65 1150.00,926.67 1150.50,926.69 1151.00,926.70 1151.50,926.72 1152.00,926.74 1152.50,926.75 1153.00,926.77 1153.50,926.79 1154.00,926.80 1154.50,926.82 1155.00,926.84 1155.50,926.85 1156.00,926.87 1156.50,926.89 1157.00,926.90 1157.50,926.92 1158.00,926.93 1158.50,926.95 1159.00,926.97 1159.50,926.98 1160.00,927.00 1160.50,927.02 1161.00,927.03 1161.50,927.05 1162.00,927.06 1162.50,927.08 1163.00,927.09 1163.50,927.11 1164.00,927.13 1164.50,927.14 1165.00,927.16 1165.50,927.17 1166.00,927.19 1166.50,927.20 1167.00,927.22 1167.50,927.23 1168.00,927.25 1168.50,927.27 1169.00,927.28 1169.50,927.30 1170.00,927.31 1170.50,927.33 1171.00,927.34 1171.50,927.36 1172.00,927.37 1172.50,927.39 1173.00,927.40 1173.50,927.42 1174.00,927.43 1174.50,927.44 1175.00,927.46 1175.50,927.47 1176.00,927.49 1176.50,927.50 1177.00,927.52 1177.50,927.53 1178.00,927.55 1178.50,927.56 1179.00,927.58 1179.50,927.59 1180.00,927.60 1180.50,927.62 1181.00,927.63 1181.50,927.65 1182.00,927.66 1182.50,927.67 1183.00,927.69 1183.50,927.70 1184.00,927.72 1184.50,927.73 1185.00,927.74 1185.50,927.76 1186.00,927.77 1186.50,927.78 1187.00,927.80 1187.50,927.81 1188.00,927.83 1188.50,927.84 1189.00,927.85 1189.50,927.87 1190.00,927.88 1190.50,927.89 1191.00,927.91 1191.50,927.92 1192.00,927.93 1192.50,927.95 1193.00,927.96 1193.50,927.97 1194.00,927.99 1194.50,928.00 1195.00,928.01 1195.50,928.03 1196.00,928.04 1196.50,928.05 1197.00,928.06 1197.50,928.08 1198.00,928.09 1198.50,928.10 1199.00,928.12 1199.50,928.13 1200.00,928.14 1200.50,928.15 1201.00,928.17 1201.50,928.18 1202.00,928.19 1202.50,928.20 1203.00,928.22 1203.50,928.23 1204.00,928.24 1204.50,928.25 1205.00,928.27 1205.50,928.28 1206.00,928.29 1206.50,928.30 1207.00,928.31 1207.50,928.33 1208.00,928.34 1208.50,928.35 1209.00,928.36 1209.50,928.38 1210.00,928.39 1210.50,928.40 1211.00,928.41 1211.50,928.42 1212.00,928.44 1212.50,928.45 1213.00,928.46 1213.50,928.47 1214.00,928.48 1214.50,928.49 1215.00,928.51 1215.50,928.52 1216.00,928.53 1216.50,928.54 1217.00,928.55 1217.50,928.56 1218.00,928.58 1218.50,928.59 1219.00,928.60 1219.50,928.61 1220.00,928.62 1220.50,928.63 1221.00,928.64 1221.50,928.66 1222.00,928.67 1222.50,928.68 1223.00,928.69 1223.50,928.70 1224.00,928.71 1224.50,928.72 1225.00,928.73 1225.50,928.74 1226.00,928.76 1226.50,928.77 1227.00,928.78 1227.50,928.79 1228.00,928.80 1228.50,928.81 1229.00,928.82 1229.50,928.83 1230.00,928.84 1230.50,928.85 1231.00,928.86 1231.50,928.88 1232.00,928.89 1232.50,928.90 1233.00,928.91 1233.50,928.92 1234.00,928.93 1234.50,928.94 1235.00,928.95 1235.50,928.96 1236.00,928.97 1236.50,928.98 1237.00,928.99 1237.50,929.00 1238.00,929.01 1238.50,929.02 1239.00,929.03 1239.50,929.04 1240.00,929.05 1240.50,929.06 1241.00,929.07 1241.50,929.08 1242.00,929.10 1242.50,929.11 1243.00,929.12 1243.50,929.13 1244.00,929.14 1244.50,929.15 1245.00,929.16 1245.50,929.17 1246.00,929.18 1246.50,929.19 1247.00,929.20 1247.50,929.21 1248.00,929.22 1248.50,929.23 1249.00,929.24 1249.50,929.25 1250.00,929.25 1250.50,929.26 1251.00,929.27 1251.50,929.28 1252.00,929.29 1252.50,929.30 1253.00,929.31 1253.50,929.32 1254.00,929.33 1254.50,929.34 1255.00,929.35 1255.50,929.36 1256.00,929.37 1256.50,929.38 1257.00,929.39 1257.50,929.40 1258.00,929.41 1258.50,929.42 1259.00,929.43 1259.50,929.44 1260.00,929.45 1260.50,929.46 1261.00,929.46 1261.50,929.47 1262.00,929.48 1262.50,929.49 1263.00,929.50 1263.50,929.51 1264.00,929.52 1264.50,929.53 1265.00,929.54 1265.50,929.55 1266.00,929.56 1266.50,929.57 1267.00,929.57 1267.50,929.58 1268.00,929.59 1268.50,929.60 1269.00,929.61 1269.50,929.62 1270.00,929.63 1270.50,929.64 1271.00,929.65 1271.50,929.65 1272.00,929.66 1272.50,929.67 1273.00,929.68 1273.50,929.69 1274.00,929.70 1274.50,929.71 1275.00,929.72 1275.50,929.72 1276.00,929.73 1276.50,929.74 1277.00,929.75 1277.50,929.76 1278.00,929.77 1278.50,929.78 1279.00,929.78 1279.50,929.79 1280.00,929.80 1280.50,929.81 1281.00,929.82 1281.50,929.83 1282.00,929.84 1282.50,929.84 1283.00,929.85 1283.50,929.86 1284.00,929.87 1284.50,929.88 1285.00,929.89 1285.50,929.89 1286.00,929.90 1286.50,929.91 1287.00,929.92 1287.50,929.93 1288.00,929.94 1288.50,929.94 1289.00,929.95 1289.50,929.96 1290.00,929.97 1290.50,929.98 1291.00,929.98 1291.50,929.99 1292.00,930.00 1292.50,930.01 1293.00,930.02 1293.50,930.02 1294.00,930.03 1294.50,930.04 1295.00,930.05 1295.50,930.06 1296.00,930.06 1296.50,930.07 1297.00,930.08 1297.50,930.09 1298.00,930.10 1298.50,930.10 1299.00,930.11 1299.50,930.12 1300.00,930.13 1300.50,930.13 1301.00,930.14 1301.50,930.15 1302.00,930.16 1302.50,930.17 1303.00,930.17 1303.50,930.18 1304.00,930.19 1304.50,930.20 1305.00,930.20 1305.50,930.21 1306.00,930.22 1306.50,930.23 1307.00,930.23 1307.50,930.24 1308.00,930.25 1308.50,930.26 1309.00,930.26 1309.50,930.27 1310.00,930.28 1310.50,930.29 1311.00,930.29 1311.50,930.30 1312.00,930.31 1312.50,930.32 1313.00,930.32 1313.50,930.33 1314.00,930.34 1314.50,930.35 1315.00,930.35 1315.50,930.36 1316.00,930.37 1316.50,930.37 1317.00,930.38 1317.50,930.39 1318.00,930.40 1318.50,930.40 1319.00,930.41 1319.50,930.42 1320.00,930.43 1320.50,930.43 1321.00,930.44 1321.50,930.45 1322.00,930.45 1322.50,930.46 1323.00,930.47 1323.50,930.47 1324.00,930.48 1324.50,930.49 1325.00,930.50 1325.50,930.50 1326.00,930.51 1326.50,930.52 1327.00,930.52 1327.50,930.53 1328.00,930.54 1328.50,930.54 1329.00,930.55 1329.50,930.56 1330.00,930.57 1330.50,930.57 1331.00,930.58 1331.50,930.59 1332.00,930.59 1332.50,930.60 1333.00,930.61 1333.50,930.61 1334.00,930.62 1334.50,930.63 1335.00,930.63 1335.50,930.64 1336.00,930.65 1336.50,930.65 1337.00,930.66 1337.50,930.67 1338.00,930.67 1338.50,930.68 1339.00,930.69 1339.50,930.69 1340.00,930.70 1340.50,930.71 1341.00,930.71 1341.50,930.72 1342.00,930.73 1342.50,930.73 1343.00,930.74 1343.50,930.75 1344.00,930.75 1344.50,930.76 1345.00,930.76 1345.50,930.77 1346.00,930.78 1346.50,930.78 1347.00,930.79 1347.50,930.80 1348.00,930.80 1348.50,930.81 1349.00,930.82 1349.50,930.82 1350.00,930.83 1350.50,930.83 1351.00,930.84 1351.50,930.85 1352.00,930.85 1352.50,930.86 1353.00,930.87 1353.50,930.87 1354.00,930.88 1354.50,930.88 1355.00,930.89 1355.50,930.90 1356.00,930.90 1356.50,930.91 1357.00,930.92 1357.50,930.92 1358.00,930.93 1358.50,930.93 1359.00,930.94 1359.50,930.95 1360.00,930.95 1360.50,930.96 1361.00,930.96 1361.50,930.97 1362.00,930.98 1362.50,930.98 1363.00,930.99 1363.50,930.99 1364.00,931.00 1364.50,931.01 1365.00,931.01 1365.50,931.02 1366.00,931.02 1366.50,931.03 1367.00,931.04 1367.50,931.04 1368.00,931.05 1368.50,931.05 1369.00,931.06 1369.50,931.07 1370.00,931.07 1370.50,931.08 1371.00,931.08 1371.50,931.09 1372.00,931.10 1372.50,931.10 1373.00,931.11 1373.50,931.11 1374.00,931.12 1374.50,931.12 1375.00,931.13 1375.50,931.14 1376.00,931.14 1376.50,931.15 1377.00,931.15 1377.50,931.16 1378.00,931.16 1378.50,931.17 1379.00,931.18 1379.50,931.18 1380.00,931.19 1380.50,931.19 1381.00,931.20 1381.50,931.20 1382.00,931.21 1382.50,931.22 1383.00,931.22 1383.50,931.23 1384.00,931.23 1384.50,931.24 1385.00,931.24 1385.50,931.25 1386.00,931.25 1386.50,931.26 1387.00,931.27 1387.50,931.27 1388.00,931.28 1388.50,931.28 1389.00,931.29 1389.50,931.29 1390.00,931.30 1390.50,931.30 1391.00,931.31 1391.50,931.31 1392.00,931.32 1392.50,931.33 1393.00,931.33 1393.50,931.34 1394.00,931.34 1394.50,931.35 1395.00,931.35 1395.50,931.36 1396.00,931.36 1396.50,931.37 1397.00,931.37 1397.50,931.38 1398.00,931.38 1398.50,931.39 1399.00,931.39 1399.50,931.40 1400.00,931.40 1400.50,931.41 1401.00,931.42 1401.50,931.42 1402.00,931.43 1402.50,931.43 1403.00,931.44 1403.50,931.44 1404.00,931.45 1404.50,931.45 1405.00,931.46 1405.50,931.46 1406.00,931.47 1406.50,931.47 1407.00,931.48 1407.50,931.48 1408.00,931.49 1408.50,931.49 1409.00,931.50 1409.50,931.50 1410.00,931.51 1410.50,931.51 1411.00,931.52 1411.50,931.52 1412.00,931.53 1412.50,931.53 1413.00,931.54 1413.50,931.54 1414.00,931.55 1414.50,931.55 1415.00,931.56 1415.50,931.56 1416.00,931.57 1416.50,931.57 1417.00,931.58 1417.50,931.58 1418.00,931.59 1418.50,931.59 1419.00,931.60 1419.50,931.60 1420.00,931.61 1420.50,931.61 1421.00,931.62 1421.50,931.62 1422.00,931.63 1422.50,931.63 1423.00,931.64 1423.50,931.64 1424.00,931.65 1424.50,931.65 1425.00,931.66 1425.50,931.66 1426.00,931.67 1426.50,931.67 1427.00,931.68 1427.50,931.68 1428.00,931.68 1428.50,931.69 1429.00,931.69 1429.50,931.70 1430.00,931.70 1430.50,931.71 1431.00,931.71 1431.50,931.72 1432.00,931.72 1432.50,931.73 1433.00,931.73 1433.50,931.74 1434.00,931.74 1434.50,931.75 1435.00,931.75 1435.50,931.76 1436.00,931.76 1436.50,931.76 1437.00,931.77 1437.50,931.77 1438.00,931.78 1438.50,931.78 1439.00,931.79 1439.50,931.79 1440.00,931.80 1440.50,931.80 1441.00,931.81 1441.50,931.81 1442.00,931.82 1442.50,931.82 1443.00,931.82 1443.50,931.83 1444.00,931.83 1444.50,931.84 1445.00,931.84 1445.50,931.85 1446.00,931.85 1446.50,931.86 1447.00,931.86 1447.50,931.86 1448.00,931.87 1448.50,931.87 1449.00,931.88 1449.50,931.88 1450.00,931.89 1450.50,931.89 1451.00,931.90 1451.50,931.90 1452.00,931.90 1452.50,931.91 1453.00,931.91 1453.50,931.92 1454.00,931.92 1454.50,931.93 1455.00,931.93 1455.50,931.94 1456.00,931.94 1456.50,931.94 1457.00,931.95 1457.50,931.95 1458.00,931.96 1458.50,931.96 1459.00,931.97 1459.50,931.97 1460.00,931.97 1460.50,931.98 1461.00,931.98 1461.50,931.99 1462.00,931.99 1462.50,932.00 1463.00,932.00 1463.50,932.00 1464.00,932.01 1464.50,932.01 1465.00,932.02 1465.50,932.02 1466.00,932.02 1466.50,932.03 1467.00,932.03 1467.50,932.04 1468.00,932.04 1468.50,932.05 1469.00,932.05 1469.50,932.05 1470.00,932.06 1470.50,932.06 1471.00,932.07 1471.50,932.07 1472.00,932.07 1472.50,932.08 1473.00,932.08 1473.50,932.09 1474.00,932.09 1474.50,932.10 1475.00,932.10 1475.50,932.10 1476.00,932.11 1476.50,932.11 1477.00,932.12 1477.50,932.12 1478.00,932.12 1478.50,932.13 1479.00,932.13 1479.50,932.14 1480.00,932.14 1480.50,932.14 1481.00,932.15 1481.50,932.15 1482.00,932.16 1482.50,932.16 1483.00,932.16 1483.50,932.17 1484.00,932.17 1484.50,932.18 1485.00,932.18 1485.50,932.18 1486.00,932.19 1486.50,932.19 1487.00,932.20 1487.50,932.20 1488.00,932.20 1488.50,932.21 1489.00,932.21 1489.50,932.22 1490.00,932.22 1490.50,932.22 1491.00,932.23 1491.50,932.23 1492.00,932.23 1492.50,932.24 1493.00,932.24 1493.50,932.25 1494.00,932.25 1494.50,932.25 1495.00,932.26 1495.50,932.26 1496.00,932.27 1496.50,932.27 1497.00,932.27 1497.50,932.28 1498.00,932.28 1498.50,932.28 1499.00,932.29 1499.50,932.29 1500.00,932.30 1500.50,932.30 1501.00,932.30 1501.50,932.31 1502.00,932.31 1502.50,932.31 1503.00,932.32 1503.50,932.32 1504.00,932.33 1504.50,932.33 1505.00,932.33 1505.50,932.34 1506.00,932.34 1506.50,932.34 1507.00,932.35 1507.50,932.35 1508.00,932.36 1508.50,932.36 1509.00,932.36 1509.50,932.37 1510.00,932.37 1510.50,932.37 1511.00,932.38 1511.50,932.38 1512.00,932.39 1512.50,932.39 1513.00,932.39 1513.50,932.40 1514.00,932.40 1514.50,932.40 1515.00,932.41 1515.50,932.41 1516.00,932.41 1516.50,932.42 1517.00,932.42 1517.50,932.42 1518.00,932.43 1518.50,932.43 1519.00,932.44 1519.50,932.44 1520.00,932.44 1520.50,932.45 1521.00,932.45 1521.50,932.45 1522.00,932.46 1522.50,932.46 1523.00,932.46 1523.50,932.47 1524.00,932.47 1524.50,932.47 1525.00,932.48 1525.50,932.48 1526.00,932.49 1526.50,932.49 1527.00,932.49 1527.50,932.50 1528.00,932.50 1528.50,932.50 1529.00,932.51 1529.50,932.51 1530.00,932.51 1530.50,932.52 1531.00,932.52 1531.50,932.52 1532.00,932.53 1532.50,932.53 1533.00,932.53 1533.50,932.54 1534.00,932.54 1534.50,932.54 1535.00,932.55 1535.50,932.55 1536.00,932.55 1536.50,932.56 1537.00,932.56 1537.50,932.56 1538.00,932.57 1538.50,932.57 1539.00,932.57 1539.50,932.58 1540.00,932.58 1540.50,932.58 1541.00,932.59 1541.50,932.59 1542.00,932.59 1542.50,932.60 1543.00,932.60 1543.50,932.60 1544.00,932.61 1544.50,932.61 1545.00,932.61 1545.50,932.62 1546.00,932.62 1546.50,932.62 1547.00,932.63 1547.50,932.63 1548.00,932.63 1548.50,932.64 1549.00,932.64 1549.50,932.64 1550.00,932.65 1550.50,932.65 1551.00,932.65 1551.50,932.66 1552.00,932.66 1552.50,932.66 1553.00,932.67 1553.50,932.67 1554.00,932.67 1554.50,932.68 1555.00,932.68 1555.50,932.68 1556.00,932.69 1556.50,932.69 1557.00,932.69 1557.50,932.70 1558.00,932.70 1558.50,932.70 1559.00,932.71 1559.50,932.71 1560.00,932.71 1560.50,932.72 1561.00,932.72 1561.50,932.72 1562.00,932.72 1562.50,932.73 1563.00,932.73 1563.50,932.73 1564.00,932.74 1564.50,932.74 1565.00,932.74 1565.50,932.75 1566.00,932.75 1566.50,932.75 1567.00,932.76 1567.50,932.76 1568.00,932.76 1568.50,932.77 1569.00,932.77 1569.50,932.77 1570.00,932.77 1570.50,932.78 1571.00,932.78 1571.50,932.78 1572.00,932.79 1572.50,932.79 1573.00,932.79 1573.50,932.80 1574.00,932.80 1574.50,932.80 1575.00,932.81 1575.50,932.81 1576.00,932.81 1576.50,932.81 1577.00,932.82 1577.50,932.82 1578.00,932.82 1578.50,932.83 1579.00,932.83 1579.50,932.83 1580.00,932.84 1580.50,932.84 1581.00,932.84 1581.50,932.84 1582.00,932.85 1582.50,932.85 1583.00,932.85 1583.50,932.86 1584.00,932.86 1584.50,932.86 1585.00,932.87 1585.50,932.87 1586.00,932.87 1586.50,932.87 1587.00,932.88 1587.50,932.88 1588.00,932.88 1588.50,932.89 1589.00,932.89 1589.50,932.89 1590.00,932.90 1590.50,932.90 1591.00,932.90 1591.50,932.90 1592.00,932.91 1592.50,932.91 1593.00,932.91 1593.50,932.92 1594.00,932.92 1594.50,932.92 1595.00,932.92 1595.50,932.93 1596.00,932.93 1596.50,932.93 1597.00,932.94 1597.50,932.94 1598.00,932.94 1598.50,932.94 1599.00,932.95 1599.50,932.95 1600.00,932.95 1600.50,932.96 1601.00,932.96 1601.50,932.96 1602.00,932.96 1602.50,932.97 1603.00,932.97 1603.50,932.97 1604.00,932.98 1604.50,932.98 1605.00,932.98 1605.50,932.98 1606.00,932.99 1606.50,932.99 1607.00,932.99 1607.50,933.00 1608.00,933.00 1608.50,933.00"/>
<polyline fill="none" stroke="#ff0000" stroke-width="1" shape-rendering="crispEdges" stroke-dasharray="2,1" points="65.50,625.17 66.00,625.17 66.50,625.17 67.00,625.17 67.50,625.17 68.00,625.17 68.50,625.17 69.00,625.17 69.50,625.17 70.00,625.17 70.50,625.17 71.00,625.18 71.50,625.18 72.00,625.18 72.50,625.18 73.00,625.18 73.50,625.18 74.00,625.18 74.50,625.18 75.00,625.18 75.50,625.18 76.00,625.18 76.50,625.18 77.00,625.19 77.50,625.19 78.00,625.19 78.50,625.19 79.00,625.19 79.50,625.19 80.00,625.19 80.50,625.19 81.00,625.19 81.50,625.19 82.00,625.19 82.50,625.19 83.00,625.20 83.50,625.20 84.00,625.20 84.50,625.20 85.00,625.20 85.50,625.20 86.00,625.20 86.50,625.20 87.00,625.20 87.50,625.20 88.00,625.20 88.50,625.20 89.00,625.21 89.50,625.21 90.00,625.21 90.50,625.21 91.00,625.21 91.50,625.21 92.00,625.21 92.50,625.21 93.00,625.21 93.50,625.21 94.00,625.21 94.50,625.21 95.00,625.22 95.50,625.22 96.00,625.22 96.50,625.22 97.00,625.22 97.50,625.22 98.00,625.22 98.50,625.22 99.00,625.22 99.50,625.22 100.00,625.22 100.50,625.23 101.00,625.23 101.50,625.23 102.00,625.23 102.50,625.23 103.00,625.23 103.50,625.23 104.00,625.23 104.50,625.23 105.00,625.23 105.50,625.23 106.00,625.24 106.50,625.24 107.00,625.24 107.50,625.24 108.00,625.24 108.50,625.24 109.00,625.24 109.50,625.24 110.00,625.24 110.50,625.24 111.00,625.24 111.50,625.25 112.00,625.25 112.50,625.25 113.00,625.25 113.50,625.25 114.00,625.25 114.50,625.25 115.00,625.25 115.50,625.25 116.00,625.25 116.50,625.25 117.00,625.26 117.50,625.26 118.00,625.26 118.50,625.26 119.00,625.26 119.50,625.26 120.00,625.26 120.50,625.26 121.00,625.26 121.50,625.26 122.00,625.26 122.50,625.27 123.00,625.27 123.50,625.27 124.00,625.27 124.50,625.27 125.00,625.27 125.50,625.27 126.00,625.27 126.50,625.27 127.00,625.27 127.50,625.27 128.00,625.28 128.50,625.28 129.00,625.28 129.50,625.28 130.00,625.28 130.50,625.28 131.00,625.28 131.50,625.28 132.00,625.28 132.50,625.28 133.00,625.29 133.50,625.29 134.00,625.29 134.50,625.29 135.00,625.29 135.50,625.29 136.00,625.29 136.50,625.29 137.00,625.29 137.50,625.29 138.00,625.29 138.50,625.30 139.00,625.30 139.50,625.30 140.00,625.30 140.50,625.30 141.00,625.30 141.50,625.30 142.00,625.30 142.50,625.30 143.00,625.30 143.50,625.31 144.00,625.31 144.50,625.31 145.00,625.31 145.50,625.31 146.00,625.31 146.50,625.31 147.00,625.31 147.50,625.31 148.00,625.31 148.50,625.32 149.00,625.32 149.50,625.32 150.00,625.32 150.50,625.32 151.00,625.32 151.50,625.32 152.00,625.32 152.50,625.32 153.00,625.32 153.50,625.33 154.00,625.33 154.50,625.33 155.00,625.33 155.50,625.33 156.00,625.33 156.50,625.33 157.00,625.33 157.50,625.33 158.00,625.33 158.50,625.34 159.00,625.34 159.50,625.34 160.00,625.34 160.50,625.34 161.00,625.34 161.50,625.34 162.00,625.34 162.50,625.34 163.00,625.35 163.50,625.35 164.00,625.35 164.50,625.35 165.00,625.35 165.50,625.35 166.00,625.35 166.50,625.35 167.00,625.35 167.50,625.35 168.00,625.36 168.50,625.36 169.00,625.36 169.50,625.36 170.00,625.36 170.50,625.36 171.00,625.36 171.50,625.36 172.00,625.36 172.50,625.37 173.00,625.37 173.50,625.37 174.00,625.37 174.50,625.37 175.00,625.37 175.50,625.37 176.00,625.37 176.50,625.37 177.00,625.38 177.50,625.38 178.00,625.38 178.50,625.38 179.00,625.38 179.50,625.38 180.00,625.38 180.50,625.38 181.00,625.38 181.50,625.39 182.00,625.39 182.50,625.39 183.00,625.39 183.50,625.39 184.00,625.39 184.50,625.39 185.00,625.39 185.50,625.39 186.00,625.40 186.50,625.40 187.00,625.40 187.50,625.40 188.00,625.40 188.50,625.40 189.00,625.40 189.50,625.40 190.00,625.40 190.50,625.41 191.00,625.41 191.50,625.41 192.00,625.41 192.50,625.41 193.00,625.41 193.50,625.41 194.00,625.41 194.50,625.41 195.00,625.42 195.50,625.42 196.00,625.42 196.50,625.42 197.00,625.42 197.50,625.42 198.00,625.42 198.50,625.42 199.00,625.43 199.50,625.43 200.00,625.43 200.50,625.43 201.00,625.43 201.50,625.43 202.00,625.43 202.50,625.43 203.00,625.43 203.50,625.44 204.00,625.44 204.50,625.44 205.00,625.44 205.50,625.44 206.00,625.44 206.50,625.44 207.00,625.44 207.50,625.45 208.00,625.45 208.50,625.45 209.00,625.45 209.50,625.45 210.00,625.45 210.50,625.45 211.00,625.45 211.50,625.45 212.00,625.46 212.50,625.46 213.00,625.46 213.50,625.46 214.00,625.46 214.50,625.46 215.00,625.46 215.50,625.46 216.00,625.47 216.50,625.47 217.00,625.47 217.50,625.47 218.00,625.47 218.50,625.47 219.00,625.47 219.50,625.47 220.00,625.48 220.50,625.48 221.00,625.48 221.50,625.48 222.00,625.48 222.50,625.48 223.00,625.48 223.50,625.48 224.00,625.49 224.50,625.49 225.00,625.49 225.50,625.49 226.00,625.49 226.50,625.49 227.00,625.49 227.50,625.49 228.00,625.50 228.50,625.50 229.00,625.50 229.50,625.50 230.00,625.50 230.50,625.50 231.00,625.50 231.50,625.51 232.00,625.51 232.50,625.51 233.00,625.51 233.50,625.51 234.00,625.51 234.50,625.51 235.00,625.51 235.50,625.52 236.00,625.52 236.50,625.52 237.00,625.52 237.50,625.52 238.00,625.52 238.50,625.52 239.00,625.52 239.50,625.53 240.00,625.53 240.50,625.53 241.00,625.53 241.50,625.53 242.00,625.53 242.50,625.53 243.00,625.54 243.50,625.54 244.00,625.54 244.50,625.54 245.00,625.54 245.50,625.54 246.00,625.54 246.50,625.55 247.00,625.55 247.50,625.55 248.00,625.55 248.50,625.55 249.00,625.55 249.50,625.55 250.00,625.55 250.50,625.56 251.00,625.56 251.50,625.56 252.00,625.56 252.50,625.56 253.00,625.56 253.50,625.56 254.00,625.57 254.50,625.57 255.00,625.57 255.50,625.57 256.00,625.57 256.50,625.57 257.00,625.57 257.50,625.58 258.00,625.58 258.50,625.58 259.00,625.58 259.50,625.58 260.00,625.58 260.50,625.58 261.00,625.59 261.50,625.59 262.00,625.59 262.50,625.59 263.00,625.59 263.50,625.59 264.00,625.59 264.50,625.60 265.00,625.60 265.50,625.60 266.00,625.60 266.50,625.60 267.00,625.60 267.50,625.60 268.00,625.61 268.50,625.61 269.00,625.61 269.50,625.61 270.00,625.61 270.50,625.61 271.00,625.61 271.50,625.62 272.00,625.62 272.50,625.62 273.00,625.62 273.50,625.62 274.00,625.62 274.50,625.63 275.00,625.63 275.50,625.63 276.00,625.63 276.50,625.63 277.00,625.63 277.50,625.63 278.00,625.64 278.50,625.64 279.00,625.64 279.50,625.64 280.00,625.64 280.50,625.64 281.00,625.64 281.50,625.65 282.00,625.65 282.50,625.65 283.00,625.65 283.50,625.65 284.00,625.65 284.50,625.66 285.00,625.66 285.50,625.66 286.00,625.66 286.50,625.66 287.00,625.66 287.50,625.67 288.00,625.67 288.50,625.67 289.00,625.67 289.50,625.67 290.00,625.67 290.50,625.67 291.00,625.68 291.50,625.68 292.00,625.68 292.50,625.68 293.00,625.68 293.50,625.68 294.00,625.69 294.50,625.69 295.00,625.69 295.50,625.69 296.00,625.69 296.50,625.69 297.00,625.70 297.50,625.70 298.00,625.70 298.50,625.70 299.00,625.70 299.50,625.70 300.00,625.71 300.50,625.71 301.00,625.71 301.50,625.71 302.00,625.71 302.50,625.71 303.00,625.72 303.50,625.72 304.00,625.72 304.50,625.72 305.00,625.72 305.50,625.72 306.00,625.73 306.50,625.73 307.00,625.73 307.50,625.73 308.00,625.73 308.50,625.73 309.00,625.74 309.50,625.74 310.00,625.74 310.50,625.74 311.00,625.74 311.50,625.74 312.00,625.75 312.50,625.75 313.00,625.75 313.50,625.75 314.00,625.75 314.50,625.75 315.00,625.76 315.50,625.76 316.00,625.76 316.50,625.76 317.00,625.76 317.50,625.76 318.00,625.77 318.50,625.77 319.00,625.77 319.50,625.77 320.00,625.77 320.50,625.78 321.00,625.78 321.50,625.78 322.00,625.78 322.50,625.78 323.00,625.78 323.50,625.79 324.00,625.79 324.50,625.79 325.00,625.79 325.50,625.79 326.00,625.80 326.50,625.80 327.00,625.80 327.50,625.80 328.00,625.80 328.50,625.80 329.00,625.81 329.50,625.81 330.00,625.81 330.50,625.81 331.00,625.81 331.50,625.82 332.00,625.82 332.50,625.82 333.00,625.82 333.50,625.82 334.00,625.82 334.50,625.83 335.00,625.83 335.50,625.83 336.00,625.83 336.50,625.83 337.00,625.84 337.50,625.84 338.00,625.84 338.50,625.84 339.00,625.84 339.50,625.85 340.00,625.85 340.50,625.85 341.00,625.85 341.50,625.85 342.00,625.86 342.50,625.86 343.00,625.86 343.50,625.86 344.00,625.86 344.50,625.86 345.00,625.87 345.50,625.87 346.00,625.87 346.50,625.87 347.00,625.87 347.50,625.88 348.00,625.88 348.50,625.88 349.00,625.88 349.50,625.88 350.00,625.89 350.50,625.89 351.00,625.89 351.50,625.89 352.00,625.89 352.50,625.90 353.00,625.90 353.50,625.90 354.00,625.90 354.50,625.90 355.00,625.91 355.50,625.91 356.00,625.91 356.50,625.91 357.00,625.91 357.50,625.92 358.00,625.92 358.50,625.92 359.00,625.92 359.50,625.93 360.00,625.93 360.50,625.93 361.00,625.93 361.50,625.93 362.00,625.94 362.50,625.94 363.00,625.94 363.50,625.94 364.00,625.94 364.50,625.95 365.00,625.95 365.50,625.95 366.00,625.95 366.50,625.95 367.00,625.96 367.50,625.96 368.00,625.96 368.50,625.96 369.00,625.97 369.50,625.97 370.00,625.97 370.50,625.97 371.00,625.97 371.50,625.98 372.00,625.98 372.50,625.98 373.00,625.98 373.50,625.99 374.00,625.99 374.50,625.99 375.00,625.99 375.50,625.99 376.00,626.00 376.50,626.00 377.00,626.00 377.50,626.00 378.00,626.01 378.50,626.01 379.00,626.01 379.50,626.01 380.00,626.01 380.50,626.02 381.00,626.02 381.50,626.02 382.00,626.02 382.50,626.03 383.00,626.03 383.50,626.03 384.00,626.03 384.50,626.03 385.00,626.04 385.50,626.04 386.00,626.04 386.50,626.04 387.00,626.05 387.50,626.05 388.00,626.05 388.50,626.05 389.00,626.06 389.50,626.06 390.00,626.06 390.50,626.06 391.00,626.07 391.50,626.07 392.00,626.07 392.50,626.07 393.00,626.07 393.50,626.08 394.00,626.08 394.50,626.08 395.00,626.08 395.50,626.09 396.00,626.09 396.50,626.09 397.00,626.09 397.50,626.10 398.00,626.10 398.50,626.10 399.00,626.10 399.50,626.11 400.00,626.11 400.50,626.11 401.00,626.11 401.50,626.12 402.00,626.12 402.50,626.12 403.00,626.12 403.50,626.13 404.00,626.13 404.50,626.13 405.00,626.13 405.50,626.14 406.00,626.14 406.50,626.14 407.00,626.14 407.50,626.15 408.00,626.15 408.50,626.15 409.00,626.15 409.50,626.16 410.00,626.16 410.50,626.16 411.00,626.16 411.50,626.17 412.00,626.17 412.50,626.17 413.00,626.18 413.50,626.18 414.00,626.18 414.50,626.18 415.00,626.19 415.50,626.19 416.00,626.19 416.50,626.19 417.00,626.20 417.50,626.20 418.00,626.20 418.50,626.20 419.00,626.21 419.50,626.21 420.00,626.21 420.50,626.22 421.00,626.22 421.50,626.22 422.00,626.22 422.50,626.23 423.00,626.23 423.50,626.23 424.00,626.23 424.50,626.24 425.00,626.24 425.50,626.24 426.00,626.25 426.50,626.25 427.00,626.25 427.50,626.25 428.00,626.26 428.50,626.26 429.00,626.26 429.50,626.27 430.00,626.27 430.50,626.27 431.00,626.27 431.50,626.28 432.00,626.28 432.50,626.28 433.00,626.29 433.50,626.29 434.00,626.29 434.50,626.29 435.00,626.30 435.50,626.30 436.00,626.30 436.50,626.31 437.00,626.31 437.50,626.31 438.00,626.32 438.50,626.32 439.00,626.32 439.50,626.32 440.00,626.33 440.50,626.33 441.00,626.33 441.50,626.34 442.00,626.34 442.50,626.34 443.00,626.35 443.50,626.35 444.00,626.35 444.50,626.35 445.00,626.36 445.50,626.36 446.00,626.36 446.50,626.37 447.00,626.37 447.50,626.37 448.00,626.38 448.50,626.38 449.00,626.38 449.50,626.39 450.00,626.39 450.50,626.39 451.00,626.39 451.50,626.40 452.00,626.40 452.50,626.40 453.00,626.41 453.50,626.41 454.00,626.41 454.50,626.42 455.00,626.42 455.50,626.42 456.00,626.43 456.50,626.43 457.00,626.43 457.50,626.44 458.00,626.44 458.50,626.44 459.00,626.45 459.50,626.45 460.00,626.45 460.50,626.46 461.00,626.46 461.50,626.46 462.00,626.47 462.50,626.47 463.00,626.47 463.50,626.48 464.00,626.48 464.50,626.48 465.00,626.49 465.50,626.49 466.00,626.49 466.50,626.50 467.00,626.50 467.50,626.50 468.00,626.51 468.50,626.51 469.00,626.51 469.50,626.52 470.00,626.52 470.50,626.52 471.00,626.53 471.50,626.53 472.00,626.54 472.50,626.54 473.00,626.54 473.50,626.55 474.00,626.55 474.50,626.55 475.00,626.56 475.50,626.56 476.00,626.56 476.50,626.57 477.00,626.57 477.50,626.57 478.00,626.58 478.50,626.58 479.00,626.59 479.50,626.59 480.00,626.59 480.50,626.60 481.00,626.60 481.50,626.60 482.00,626.61 482.50,626.61 483.00,626.62 483.50,626.62 484.00,626.62 484.50,626.63 485.00,626.63 485.50,626.63 486.00,626.64 486.50,626.64 487.00,626.65 487.50,626.65 488.00,626.65 488.50,626.66 489.00,626.66 489.50,626.67 490.00,626.67 490.50,626.67 491.00,626.68 491.50,626.68 492.00,626.69 492.50,626.69 493.00,626.69 493.50,626.70 494.00,626.70 494.50,626.71 495.00,626.71 495.50,626.71 496.00,626.72 496.50,626.72 497.00,626.73 497.50,626.73 498.00,626.73 498.50,626.74 499.00,626.74 499.50,626.75 500.00,626.75 500.50,626.75 501.00,626.76 501.50,626.76 502.00,626.77 502.50,626.77 503.00,626.78 503.50,626.78 504.00,626.78 504.50,626.79 505.00,626.79 505.50,626.80 506.00,626.80 506.50,626.80 507.00,626.81 507.50,626.81 508.00,626.82 508.50,626.82 509.00,626.83 509.50,626.83 510.00,626.84 510.50,626.84 511.00,626.84 511.50,626.85 512.00,626.85 512.50,626.86 513.00,626.86 513.50,626.87 514.00,626.87 514.50,626.88 515.00,626.88 515.50,626.88 516.00,626.89 516.50,626.89 517.00,626.90 517.50,626.90 518.00,626.91 518.50,626.91 519.00,626.92 519.50,626.92 520.00,626.93 520.50,626.93 521.00,626.94 521.50,626.94 522.00,626.94 522.50,626.95 523.00,626.95 523.50,626.96 524.00,626.96 524.50,626.97 525.00,626.97 525.50,626.98 526.00,626.98 526.50,626.99 527.00,626.99 527.50,627.00 528.00,627.00 528.50,627.01 529.00,627.01 529.50,627.02 530.00,627.02 530.50,627.03 531.00,627.03 531.50,627.04 532.00,627.04 532.50,627.05 533.00,627.05 533.50,627.06 534.00,627.06 534.50,627.07 535.00,627.07 535.50,627.08 536.00,627.08 536.50,627.09 537.00,627.09 537.50,627.10 538.00,627.10 538.50,627.11 539.00,627.12 539.50,627.12 540.00,627.13 540.50,627.13 541.00,627.14 541.50,627.14 542.00,627.15 542.50,627.15 543.00,627.16 543.50,627.16 544.00,627.17 544.50,627.17 545.00,627.18 545.50,627.19 546.00,627.19 546.50,627.20 547.00,627.20 547.50,627.21 548.00,627.21 548.50,627.22 549.00,627.22 549.50,627.23 550.00,627.24 550.50,627.24 551.00,627.25 551.50,627.25 552.00,627.26 552.50,627.26 553.00,627.27 553.50,627.28 554.00,627.28 554.50,627.29 555.00,627.29 555.50,627.30 556.00,627.31 556.50,627.31 557.00,627.32 557.50,627.32 558.00,627.33 558.50,627.34 559.00,627.34 559.50,627.35 560.00,627.35 560.50,627.36 561.00,627.37 561.50,627.37 562.00,627.38 562.50,627.38 563.00,627.39 563.50,627.40 564.00,627.40 564.50,627.41 565.00,627.42 565.50,627.42 566.00,627.43 566.50,627.43 567.00,627.44 567.50,627.45 568.00,627.45 568.50,627.46 569.00,627.47 569.50,627.47 570.00,627.48 570.50,627.49 571.00,627.49 571.50,627.50 572.00,627.51 572.50,627.51 573.00,627.52 573.50,627.53 574.00,627.53 574.50,627.54 575.00,627.55 575.50,627.55 576.00,627.56 576.50,627.57 577.00,627.57 577.50,627.58 578.00,627.59 578.50,627.60 579.00,627.60 579.50,627.61 580.00,627.62 580.50,627.62 581.00,627.63 581.50,627.64 582.00,627.65 582.50,627.65 583.00,627.66 583.50,627.67 584.00,627.67 584.50,627.68 585.00,627.69 585.50,627.70 586.00,627.70 586.50,627.71 587.00,627.72 587.50,627.73 588.00,627.73 588.50,627.74 589.00,627.75 589.50,627.76 590.00,627.76 590.50,627.77 591.00,627.78 591.50,627.79 592.00,627.79 592.50,627.80 593.00,627.81 593.50,627.82 594.00,627.83 594.50,627.83 595.00,627.84 595.50,627.85 596.00,627.86 596.50,627.87 597.00,627.87 597.50,627.88 598.00,627.89 598.50,627.90 599.00,627.91 599.50,627.92 600.00,627.92 600.50,627.93 601.00,627.94 601.50,627.95 602.00,627.96 602.50,627.97 603.00,627.97 603.50,627.98 604.00,627.99 604.50,628.00 605.00,628.01 605.50,628.02 606.00,628.03 606.50,628.03 607.00,628.04 607.50,628.05 608.00,628.06 608.50,628.07 609.00,628.08 609.50,628.09 610.00,628.10 610.50,628.11 611.00,628.11 611.50,628.12 612.00,628.13 612.50,628.14 613.00,628.15 613.50,628.16 614.00,628.17 614.50,628.18 615.00,628.19 615.50,628.20 616.00,628.21 616.50,628.22 617.00,628.23 617.50,628.24 618.00,628.25 618.50,628.26 619.00,628.27 619.50,628.28 620.00,628.29 620.50,628.30 621.00,628.31 621.50,628.32 622.00,628.33 622.50,628.34 623.00,628.35 623.50,628.36 624.00,628.37 624.50,628.38 625.00,628.39 625.50,628.40 626.00,628.41 626.50,628.42 627.00,628.43 627.50,628.44 628.00,628.45 628.50,628.46 629.00,628.47 629.50,628.48 630.00,628.49 630.50,628.50 631.00,628.51 631.50,628.53 632.00,628.54 632.50,628.55 633.00,628.56 633.50,628.57 634.00,628.58 634.50,628.59 635.00,628.60 635.50,628.62 636.00,628.63 636.50,628.64 637.00,628.65 637.50,628.66 638.00,628.67 638.50,628.68 639.00,628.70 639.50,628.71 640.00,628.72 640.50,628.73 641.00,628.74 641.50,628.76 642.00,628.77 642.50,628.78 643.00,628.79 643.50,628.81 644.00,628.82 644.50,628.83 645.00,628.84 645.50,628.86 646.00,628.87 646.50,628.88 647.00,628.89 647.50,628.91 648.00,628.92 648.50,628.93 649.00,628.95 649.50,628.96 650.00,628.97 650.50,628.99 651.00,629.00 651.50,629.01 652.00,629.03 652.50,629.04 653.00,629.05 653.50,629.07 654.00,629.08 654.50,629.09 655.00,629.11 655.50,629.12 656.00,629.14 656.50,629.15 657.00,629.16 657.50,629.18 658.00,629.19 658.50,629.21 659.00,629.22 659.50,629.24 660.00,629.25 660.50,629.27 661.00,629.28 661.50,629.30 662.00,629.31 662.50,629.33 663.00,629.34 663.50,629.36 664.00,629.37 664.50,629.39 665.00,629.40 665.50,629.42 666.00,629.43 666.50,629.45 667.00,629.47 667.50,629.48 668.00,629.50 668.50,629.51 669.00,629.53 669.50,629.55 670.00,629.56 670.50,629.58 671.00,629.60 671.50,629.61 672.00,629.63 672.50,629.65 673.00,629.66 673.50,629.68 674.00,629.70 674.50,629.72 675.00,629.73 675.50,629.75 676.00,629.77 676.50,629.79 677.00,629.80 677.50,629.82 678.00,629.84 678.50,629.86 679.00,629.88 679.50,629.90 680.00,629.91 680.50,629.93 681.00,629.95 681.50,629.97 682.00,629.99 682.50,630.01 683.00,630.03 683.50,630.05 684.00,630.07 684.50,630.09 685.00,630.11 685.50,630.13 686.00,630.15 686.50,630.17 687.00,630.19 687.50,630.21 688.00,630.23 688.50,630.25 689.00,630.27 689.50,630.29 690.00,630.31 690.50,630.33 691.00,630.35 691.50,630.38 692.00,630.40 692.50,630.42 693.00,630.44 693.50,630.46 694.00,630.49 694.50,630.51 695.00,630.53 695.50,630.55 696.00,630.58 696.50,630.60 697.00,630.62 697.50,630.65 698.00,630.67 698.50,630.69 699.00,630.72 699.50,630.74 700.00,630.77 700.50,630.79 701.00,630.82 701.50,630.84 702.00,630.86 702.50,630.89 703.00,630.92 703.50,630.94 704.00,630.97 704.50,630.99 705.00,631.02 705.50,631.04 706.00,631.07 706.50,631.10 707.00,631.12 707.50,631.15 708.00,631.18 708.50,631.21 709.00,631.23 709.50,631.26 710.00,631.29 710.50,631.32 711.00,631.35 711.50,631.37 712.00,631.40 712.50,631.43 713.00,631.46 713.50,631.49 714.00,631.52 714.50,631.55 715.00,631.58 715.50,631.61 716.00,631.64 716.50,631.67 717.00,631.71 717.50,631.74 718.00,631.77 718.50,631.80 719.00,631.83 719.50,631.87 720.00,631.90 720.50,631.93 721.00,631.97 721.50,632.00 722.00,632.03 722.50,632.07 723.00,632.10 723.50,632.14 724.00,632.17 724.50,632.21 725.00,632.24 725.50,632.28 726.00,632.32 726.50,632.35 727.00,632.39 727.50,632.43 728.00,632.47 728.50,632.50 729.00,632.54 729.50,632.58 730.00,632.62 730.50,632.66 731.00,632.70 731.50,632.74 732.00,632.78 732.50,632.82 733.00,632.86 733.50,632.90 734.00,632.95 734.50,632.99 735.00,633.03 735.50,633.07 736.00,633.12 736.50,633.16 737.00,633.21 737.50,633.25 738.00,633.30 738.50,633.34 739.00,633.39 739.50,633.43 740.00,633.48 740.50,633.53 741.00,633.58 741.50,633.63 742.00,633.68 742.50,633.72 743.00,633.77 743.50,633.83 744.00,633.88 744.50,633.93 745.00,633.98 745.50,634.03 746.00,634.09 746.50,634.14 747.00,634.19 747.50,634.25 748.00,634.31 748.50,634.36 749.00,634.42 749.50,634.48 750.00,634.53 750.50,634.59 751.00,634.65 751.50,634.71 752.00,634.77 752.50,634.83 753.00,634.90 753.50,634.96 754.00,635.02 754.50,635.09 755.00,635.15 755.50,635.22 756.00,635.28 756.50,635.35 757.00,635.42 757.50,635.49 758.00,635.56 758.50,635.63 759.00,635.70 759.50,635.77 760.00,635.84 760.50,635.92 761.00,635.99 761.50,636.07 762.00,636.15 762.50,636.22 763.00,636.30 763.50,636.38 764.00,636.46 764.50,636.55 765.00,636.63 765.50,636.71 766.00,636.80 766.50,636.88 767.00,636.97 767.50,637.06 768.00,637.15 768.50,637.24 769.00,637.33 769.50,637.43 770.00,637.52 770.50,637.62 771.00,637.72 771.50,637.82 772.00,637.92 772.50,638.02 773.00,638.12 773.50,638.23 774.00,638.33 774.50,638.44 775.00,638.55 775.50,638.66 776.00,638.78 776.50,638.89 777.00,639.01 777.50,639.12 778.00,639.25 778.50,639.37 779.00,639.49 779.50,639.62 780.00,639.75 780.50,639.88 781.00,640.01 781.50,640.14 782.00,640.28 782.50,640.42 783.00,640.56 783.50,640.70 784.00,640.85 784.50,641.00 785.00,641.15 785.50,641.31 786.00,641.46 786.50,641.62 787.00,641.78 787.50,641.95 788.00,642.12 788.50,642.29 789.00,642.47 789.50,642.64 790.00,642.83 790.50,643.01 791.00,643.20 791.50,643.39 792.00,643.59 792.50,643.79 793.00,644.00 793.50,644.20 794.00,644.42 794.50,644.64 795.00,644.86 795.50,645.08 796.00,645.32 796.50,645.55 797.00,645.80 797.50,646.04 798.00,646.30 798.50,646.56 799.00,646.82 799.50,647.09 800.00,647.37 800.50,647.65 801.00,647.94 801.50,648.24 802.00,648.55 802.50,648.86 803.00,649.18 803.50,649.51 804.00,649.84 804.50,650.19 805.00,650.54 805.50,650.91 806.00,651.28 806.50,651.67 807.00,652.06 807.50,652.47 808.00,652.89 808.50,653.32 809.00,653.76 809.50,654.21 810.00,654.68 810.50,655.17 811.00,655.66 811.50,656.18 812.00,656.71 812.50,657.25 813.00,657.82 813.50,658.40 814.00,659.00 814.50,659.63 815.00,660.27 815.50,660.94 816.00,661.63 816.50,662.34 817.00,663.08 817.50,663.85 818.00,664.65 818.50,665.48 819.00,666.34 819.50,667.23 820.00,668.16 820.50,669.13 821.00,670.13 821.50,671.18 822.00,672.27 822.50,673.41 823.00,674.60 823.50,675.84 824.00,677.14 824.50,678.50 825.00,679.92 825.50,681.40 826.00,682.96 826.50,684.59 827.00,686.30 827.50,688.09 828.00,689.97 828.50,691.95 829.00,694.02 829.50,696.20 830.00,698.49 830.50,700.89 831.00,703.42 831.50,706.07 832.00,708.85 832.50,711.77 833.00,714.83 833.50,718.04 834.00,721.40 834.50,724.90 835.00,728.55 835.50,732.35 836.00,736.29 836.50,740.37 837.00,744.58 837.50,748.90 838.00,753.32 838.50,757.84 839.00,762.42 839.50,767.04 840.00,771.70 840.50,776.36 841.00,780.99 841.50,785.59 842.00,790.13 842.50,794.58 843.00,798.94 843.50,803.18 844.00,807.30 844.50,811.29 845.00,815.13 845.50,818.83 846.00,822.38 846.50,825.78 847.00,829.04 847.50,832.14 848.00,835.11 848.50,837.93 849.00,840.63 849.50,843.19 850.00,845.63 850.50,847.96 851.00,850.17 851.50,852.27 852.00,854.28 852.50,856.19 853.00,858.01 853.50,859.75 854.00,861.40 854.50,862.98 855.00,864.49 855.50,865.93 856.00,867.30 856.50,868.62 857.00,869.88 857.50,871.08 858.00,872.24 858.50,873.35 859.00,874.41 859.50,875.43 860.00,876.41 860.50,877.35 861.00,878.25 861.50,879.12 862.00,879.96 862.50,880.77 863.00,881.54 863.50,882.29 864.00,883.02 864.50,883.71 865.00,884.39 865.50,885.04 866.00,885.67 866.50,886.28 867.00,886.87 867.50,887.44 868.00,887.99 868.50,888.52 869.00,889.04 869.50,889.54 870.00,890.03 870.50,890.50 871.00,890.96 871.50,891.41 872.00,891.84 872.50,892.27 873.00,892.68 873.50,893.07 874.00,893.46 874.50,893.84 875.00,894.21 875.50,894.56 876.00,894.91 876.50,895.25 877.00,895.58 877.50,895.91 878.00,896.22 878.50,896.53 879.00,896.83 879.50,897.12 880.00,897.41 880.50,897.69 881.00,897.96 881.50,898.23 882.00,898.49 882.50,898.74 883.00,898.99 883.50,899.24 884.00,899.47 884.50,899.71 885.00,899.94 885.50,900.16 886.00,900.38 886.50,900.59 887.00,900.80 887.50,901.01 888.00,901.21 888.50,901.41 889.00,901.60 889.50,901.79 890.00,901.98 890.50,902.16 891.00,902.34 891.50,902.52 892.00,902.69 892.50,902.86 893.00,903.03 893.50,903.19 894.00,903.35 894.50,903.51 895.00,903.67 895.50,903.82 896.00,903.97 896.50,904.12 897.00,904.26 897.50,904.40 898.00,904.54 898.50,904.68 899.00,904.81 899.50,904.95 900.00,905.08 900.50,905.21 901.00,905.33 901.50,905.46 902.00,905.58 902.50,905.70 903.00,905.82 903.50,905.94 904.00,906.05 904.50,906.17 905.00,906.28 905.50,906.39 906.00,906.50 906.50,906.61 907.00,906.71 907.50,906.81 908.00,906.92 908.50,907.02 909.00,907.12 909.50,907.22 910.00,907.31 910.50,907.41 911.00,907.50 911.50,907.59 912.00,907.69 912.50,907.78 913.00,907.87 913.50,907.95 914.00,908.04 914.50,908.13 915.00,908.21 915.50,908.29 916.00,908.38 916.50,908.46 917.00,908.54 917.50,908.62 918.00,908.69 918.50,908.77 919.00,908.85 919.50,908.92 920.00,909.00 920.50,909.07 921.00,909.14 921.50,909.21 922.00,909.29 922.50,909.36 923.00,909.42 923.50,909.49 924.00,909.56 924.50,909.63 925.00,909.69 925.50,909.76 926.00,909.82 926.50,909.89 927.00,909.95 927.50,910.01 928.00,910.07 928.50,910.13 929.00,910.19 929.50,910.25 930.00,910.31 930.50,910.37 931.00,910.43 931.50,910.49 932.00,910.54 932.50,910.60 933.00,910.65 933.50,910.71 934.00,910.76 934.50,910.82 935.00,910.87 935.50,910.92 936.00,910.97 936.50,911.02 937.00,911.07 937.50,911.12 938.00,911.17 938.50,911.22 939.00,911.27 939.50,911.32 940.00,911.37 940.50,911.42 941.00,911.46 941.50,911.51 942.00,911.55 942.50,911.60 943.00,911.65 943.50,911.69 944.00,911.73 944.50,911.78 945.00,911.82 945.50,911.86 946.00,911.91 946.50,911.95 947.00,911.99 947.50,912.03 948.00,912.07 948.50,912.11 949.00,912.15 949.50,912.19 950.00,912.23 950.50,912.27 951.00,912.31 951.50,912.35 952.00,912.39 952.50,912.43 953.00,912.46 953.50,912.50 954.00,912.54 954.50,912.57 955.00,912.61 955.50,912.65 956.00,912.68 956.50,912.72 957.00,912.75 957.50,912.79 958.00,912.82 958.50,912.85 959.00,912.89 959.50,912.92 960.00,912.96 960.50,912.99 961.00,913.02 961.50,913.05 962.00,913.09 962.50,913.12 963.00,913.15 963.50,913.18 964.00,913.21 964.50,913.24 965.00,913.27 965.50,913.30 966.00,913.33 966.50,913.36 967.00,913.39 967.50,913.42 968.00,913.45 968.50,913.48 969.00,913.51 969.50,913.54 970.00,913.57 970.50,913.59 971.00,913.62 971.50,913.65 972.00,913.68 972.50,913.71 973.00,913.73 973.50,913.76 974.00,913.79 974.50,913.81 975.00,913.84 975.50,913.86 976.00,913.89 976.50,913.92 977.00,913.94 977.50,913.97 978.00,913.99 978.50,914.02 979.00,914.04 979.50,914.07 980.00,914.09 980.50,914.12 981.00,914.14 981.50,914.16 982.00,914.19 982.50,914.21 983.00,914.23 983.50,914.26 984.00,914.28 984.50,914.30 985.00,914.33 985.50,914.35 986.00,914.37 986.50,914.39 987.00,914.42 987.50,914.44 988.00,914.46 988.50,914.48 989.00,914.50 989.50,914.52 990.00,914.55 990.50,914.57 991.00,914.59 991.50,914.61 992.00,914.63 992.50,914.65 993.00,914.67 993.50,914.69 994.00,914.71 994.50,914.73 995.00,914.75 995.50,914.77 996.00,914.79 996.50,914.81 997.00,914.83 997.50,914.85 998.00,914.87 998.50,914.89 999.00,914.91 999.50,914.93 1000.00,914.94 1000.50,914.96 1001.00,914.98 1001.50,915.00 1002.00,915.02 1002.50,915.04 1003.00,915.05 1003.50,915.07 1004.00,915.09 1004.50,915.11 1005.00,915.13 1005.50,915.14 1006.00,915.16 1006.50,915.18 1007.00,915.20 1007.50,915.21 1008.00,915.23 1008.50,915.25 1009.00,915.26 1009.50,915.28 1010.00,915.30 1010.50,915.31 1011.00,915.33 1011.50,915.35 1012.00,915.36 1012.50,915.38 1013.00,915.39 1013.50,915.41 1014.00,915.43 1014.50,915.44 1015.00,915.46 1015.50,915.47 1016.00,915.49 1016.50,915.50 1017.00,915.52 1017.50,915.53 1018.00,915.55 1018.50,915.56 1019.00,915.58 1019.50,915.59 1020.00,915.61 1020.50,915.62 1021.00,915.64 1021.50,915.65 1022.00,915.67 1022.50,915.68 1023.00,915.70 1023.50,915.71 1024.00,915.72 1024.50,915.74 1025.00,915.75 1025.50,915.77 1026.00,915.78 1026.50,915.79 1027.00,915.81 1027.50,915.82 1028.00,915.84 1028.50,915.85 1029.00,915.86 1029.50,915.88 1030.00,915.89 1030.50,915.90 1031.00,915.92 1031.50,915.93 1032.00,915.94 1032.50,915.95 1033.00,915.97 1033.50,915.98 1034.00,915.99 1034.50,916.01 1035.00,916.02 1035.50,916.03 1036.00,916.04 1036.50,916.06 1037.00,916.07 1037.50,916.08 1038.00,916.09 1038.50,916.10 1039.00,916.12 1039.50,916.13 1040.00,916.14 1040.50,916.15 1041.00,916.16 1041.50,916.18 1042.00,916.19 1042.50,916.20 1043.00,916.21 1043.50,916.22 1044.00,916.23 1044.50,916.25 1045.00,916.26 1045.50,916.27 1046.00,916.28 1046.50,916.29 1047.00,916.30 1047.50,916.31 1048.00,916.32 1048.50,916.34 1049.00,916.35 1049.50,916.36 1050.00,916.37 1050.50,916.38 1051.00,916.39 1051.50,916.40 1052.00,916.41 1052.50,916.42 1053.00,916.43 1053.50,916.44 1054.00,916.45 1054.50,916.46 1055.00,916.47 1055.50,916.48 1056.00,916.50 1056.50,916.51 1057.00,916.52 1057.50,916.53 1058.00,916.54 1058.50,916.55 1059.00,916.56 1059.50,916.57 1060.00,916.58 1060.50,916.59 1061.00,916.60 1061.50,916.61 1062.00,916.62 1062.50,916.62 1063.00,916.63 1063.50,916.64 1064.00,916.65 1064.50,916.66 1065.00,916.67 1065.50,916.68 1066.00,916.69 1066.50,916.70 1067.00,916.71 1067.50,916.72 1068.00,916.73 1068.50,916.74 1069.00,916.75 1069.50,916.76 1070.00,916.77 1070.50,916.77 1071.00,916.78 1071.50,916.79 1072.00,916.80 1072.50,916.81 1073.00,916.82 1073.50,916.83 1074.00,916.84 1074.50,916.85 1075.00,916.85 1075.50,916.86 1076.00,916.87 1076.50,916.88 1077.00,916.89 1077.50,916.90 1078.00,916.91 1078.50,916.91 1079.00,916.92 1079.50,916.93 1080.00,916.94 1080.50,916.95 1081.00,916.96 1081.50,916.96 1082.00,916.97 1082.50,916.98 1083.00,916.99 1083.50,917.00 1084.00,917.00 1084.50,917.01 1085.00,917.02 1085.50,917.03 1086.00,917.04 1086.50,917.04 1087.00,917.05 1087.50,917.06 1088.00,917.07 1088.50,917.08 1089.00,917.08 1089.50,917.09 1090.00,917.10 1090.50,917.11 1091.00,917.11 1091.50,917.12 1092.00,917.13 1092.50,917.14 1093.00,917.14 1093.50,917.15 1094.00,917.16 1094.50,917.17 1095.00,917.17 1095.50,917.18 1096.00,917.19 1096.50,917.20 1097.00,917.20 1097.50,917.21 1098.00,917.22 1098.50,917.22 1099.00,917.23 1099.50,917.24 1100.00,917.25 1100.50,917.25 1101.00,917.26 1101.50,917.27 1102.00,917.27 1102.50,917.28 1103.00,917.29 1103.50,917.29 1104.00,917.30 1104.50,917.31 1105.00,917.32 1105.50,917.32 1106.00,917.33 1106.50,917.34 1107.00,917.34 1107.50,917.35 1108.00,917.36 1108.50,917.36 1109.00,917.37 1109.50,917.38 1110.00,917.38 1110.50,917.39 1111.00,917.40 1111.50,917.40 1112.00,917.41 1112.50,917.42 1113.00,917.42 1113.50,917.43 1114.00,917.43 1114.50,917.44 1115.00,917.45 1115.50,917.45 1116.00,917.46 1116.50,917.47 1117.00,917.47 1117.50,917.48 1118.00,917.48 1118.50,917.49 1119.00,917.50 1119.50,917.50 1120.00,917.51 1120.50,917.52 1121.00,917.52 1121.50,917.53 1122.00,917.53 1122.50,917.54 1123.00,917.55 1123.50,917.55 1124.00,917.56 1124.50,917.56 1125.00,917.57 1125.50,917.58 1126.00,917.58 1126.50,917.59 1127.00,917.59 1127.50,917.60 1128.00,917.60 1128.50,917.61 1129.00,917.62 1129.50,917.62 1130.00,917.63 1130.50,917.63 1131.00,917.64 1131.50,917.64 1132.00,917.65 1132.50,917.66 1133.00,917.66 1133.50,917.67 1134.00,917.67 1134.50,917.68 1135.00,917.68 1135.50,917.69 1136.00,917.69 1136.50,917.70 1137.00,917.71 1137.50,917.71 1138.00,917.72 1138.50,917.72 1139.00,917.73 1139.50,917.73 1140.00,917.74 1140.50,917.74 1141.00,917.75 1141.50,917.75 1142.00,917.76 1142.50,917.76 1143.00,917.77 1143.50,917.77 1144.00,917.78 1144.50,917.78 1145.00,917.79 1145.50,917.80 1146.00,917.80 1146.50,917.81 1147.00,917.81 1147.50,917.82 1148.00,917.82 1148.50,917.83 1149.00,917.83 1149.50,917.84 1150.00,917.84 1150.50,917.85 1151.00,917.85 1151.50,917.86 1152.00,917.86 1152.50,917.87 1153.00,917.87 1153.50,917.88 1154.00,917.88 1154.50,917.88 1155.00,917.89 1155.50,917.89 1156.00,917.90 1156.50,917.90 1157.00,917.91 1157.50,917.91 1158.00,917.92 1158.50,917.92 1159.00,917.93 1159.50,917.93 1160.00,917.94 1160.50,917.94 1161.00,917.95 1161.50,917.95 1162.00,917.96 1162.50,917.96 1163.00,917.97 1163.50,917.97 1164.00,917.97 1164.50,917.98 1165.00,917.98 1165.50,917.99 1166.00,917.99 1166.50,918.00 1167.00,918.00 1167.50,918.01 1168.00,918.01 1168.50,918.01 1169.00,918.02 1169.50,918.02 1170.00,918.03 1170.50,918.03 1171.00,918.04 1171.50,918.04 1172.00,918.05 1172.50,918.05 1173.00,918.05 1173.50,918.06 1174.00,918.06 1174.50,918.07 1175.00,918.07 1175.50,918.08 1176.00,918.08 1176.50,918.08 1177.00,918.09 1177.50,918.09 1178.00,918.10 1178.50,918.10 1179.00,918.11 1179.50,918.11 1180.00,918.11 1180.50,918.12 1181.00,918.12 1181.50,918.13 1182.00,918.13 1182.50,918.13 1183.00,918.14 1183.50,918.14 1184.00,918.15 1184.50,918.15 1185.00,918.15 1185.50,918.16 1186.00,918.16 1186.50,918.17 1187.00,918.17 1187.50,918.17 1188.00,918.18 1188.50,918.18 1189.00,918.19 1189.50,918.19 1190.00,918.19 1190.50,918.20 1191.00,918.20 1191.50,918.21 1192.00,918.21 1192.50,918.21 1193.00,918.22 1193.50,918.22 1194.00,918.23 1194.50,918.23 1195.00,918.23 1195.50,918.24 1196.00,918.24 1196.50,918.24 1197.00,918.25 1197.50,918.25 1198.00,918.26 1198.50,918.26 1199.00,918.26 1199.50,918.27 1200.00,918.27 1200.50,918.27 1201.00,918.28 1201.50,918.28 1202.00,918.29 1202.50,918.29 1203.00,918.29 1203.50,918.30 1204.00,918.30 1204.50,918.30 1205.00,918.31 1205.50,918.31 1206.00,918.31 1206.50,918.32 1207.00,918.32 1207.50,918.32 1208.00,918.33 1208.50,918.33 1209.00,918.34 1209.50,918.34 1210.00,918.34 1210.50,918.35 1211.00,918.35 1211.50,918.35 1212.00,918.36 1212.50,918.36 1213.00,918.36 1213.50,918.37 1214.00,918.37 1214.50,918.37 1215.00,918.38 1215.50,918.38 1216.00,918.38 1216.50,918.39 1217.00,918.39 1217.50,918.39 1218.00,918.40 1218.50,918.40 1219.00,918.40 1219.50,918.41 1220.00,918.41 1220.50,918.41 1221.00,918.42 1221.50,918.42 1222.00,918.42 1222.50,918.43 1223.00,918.43 1223.50,918.43 1224.00,918.44 1224.50,918.44 1225.00,918.44 1225.50,918.45 1226.00,918.45 1226.50,918.45 1227.00,918.46 1227.50,918.46 1228.00,918.46 1228.50,918.47 1229.00,918.47 1229.50,918.47 1230.00,918.48 1230.50,918.48 1231.00,918.48 1231.50,918.48 1232.00,918.49 1232.50,918.49 1233.00,918.49 1233.50,918.50 1234.00,918.50 1234.50,918.50 1235.00,918.51 1235.50,918.51 1236.00,918.51 1236.50,918.52 1237.00,918.52 1237.50,918.52 1238.00,918.52 1238.50,918.53 1239.00,918.53 1239.50,918.53 1240.00,918.54 1240.50,918.54 1241.00,918.54 1241.50,918.55 1242.00,918.55 1242.50,918.55 1243.00,918.55 1243.50,918.56 1244.00,918.56 1244.50,918.56 1245.00,918.57 1245.50,918.57 1246.00,918.57 1246.50,918.58 1247.00,918.58 1247.50,918.58 1248.00,918.58 1248.50,918.59 1249.00,918.59 1249.50,918.59 1250.00,918.60 1250.50,918.60 1251.00,918.60 1251.50,918.60 1252.00,918.61 1252.50,918.61 1253.00,918.61 1253.50,918.62 1254.00,918.62 1254.50,918.62 1255.00,918.62 1255.50,918.63 1256.00,918.63 1256.50,918.63 1257.00,918.63 1257.50,918.64 1258.00,918.64 1258.50,918.64 1259.00,918.65 1259.50,918.65 1260.00,918.65 1260.50,918.65 1261.00,918.66 1261.50,918.66 1262.00,918.66 1262.50,918.66 1263.00,918.67 1263.50,918.67 1264.00,918.67 1264.50,918.68 1265.00,918.68 1265.50,918.68 1266.00,918.68 1266.50,918.69 1267.00,918.69 1267.50,918.69 1268.00,918.69 1268.50,918.70 1269.00,918.70 1269.50,918.70 1270.00,918.70 1270.50,918.71 1271.00,918.71 1271.50,918.71 1272.00,918.71 1272.50,918.72 1273.00,918.72 1273.50,918.72 1274.00,918.72 1274.50,918.73 1275.00,918.73 1275.50,918.73 1276.00,918.73 1276.50,918.74 1277.00,918.74 1277.50,918.74 1278.00,918.74 1278.50,918.75 1279.00,918.75 1279.50,918.75 1280.00,918.75 1280.50,918.76 1281.00,918.76 1281.50,918.76 1282.00,918.76 1282.50,918.77 1283.00,918.77 1283.50,918.77 1284.00,918.77 1284.50,918.78 1285.00,918.78 1285.50,918.78 1286.00,918.78 1286.50,918.79 1287.00,918.79 1287.50,918.79 1288.00,918.79 1288.50,918.80 1289.00,918.80 1289.50,918.80 1290.00,918.80 1290.50,918.81 1291.00,918.81 1291.50,918.81 1292.00,918.81 1292.50,918.82 1293.00,918.82 1293.50,918.82 1294.00,918.82 1294.50,918.82 1295.00,918.83 1295.50,918.83 1296.00,918.83 1296.50,918.83 1297.00,918.84 1297.50,918.84 1298.00,918.84 1298.50,918.84 1299.00,918.85 1299.50,918.85 1300.00,918.85 1300.50,918.85 1301.00,918.85 1301.50,918.86 1302.00,918.86 1302.50,918.86 1303.00,918.86 1303.50,918.87 1304.00,918.87 1304.50,918.87 1305.00,918.87 1305.50,918.87 1306.00,918.88 1306.50,918.88 1307.00,918.88 1307.50,918.88 1308.00,918.89 1308.50,918.89 1309.00,918.89 1309.50,918.89 1310.00,918.89 1310.50,918.90 1311.00,918.90 1311.50,918.90 1312.00,918.90 1312.50,918.90 1313.00,918.91 1313.50,918.91 1314.00,918.91 1314.50,918.91 1315.00,918.92 1315.50,918.92 1316.00,918.92 1316.50,918.92 1317.00,918.92 1317.50,918.93 1318.00,918.93 1318.50,918.93 1319.00,918.93 1319.50,918.93 1320.00,918.94 1320.50,918.94 1321.00,918.94 1321.50,918.94 1322.00,918.95 1322.50,918.95 1323.00,918.95 1323.50,918.95 1324.00,918.95 1324.50,918.96 1325.00,918.96 1325.50,918.96 1326.00,918.96 1326.50,918.96 1327.00,918.97 1327.50,918.97 1328.00,918.97 1328.50,918.97 1329.00,918.97 1329.50,918.98 1330.00,918.98 1330.50,918.98 1331.00,918.98 1331.50,918.98 1332.00,918.99 1332.50,918.99 1333.00,918.99 1333.50,918.99 1334.00,918.99 1334.50,919.00 1335.00,919.00 1335.50,919.00 1336.00,919.00 1336.50,919.00 1337.00,919.01 1337.50,919.01 1338.00,919.01 1338.50,919.01 1339.00,919.01 1339.50,919.01 1340.00,919.02 1340.50,919.02 1341.00,919.02 1341.50,919.02 1342.00,919.02 1342.50,919.03 1343.00,919.03 1343.50,919.03 1344.00,919.03 1344.50,919.03 1345.00,919.04 1345.50,919.04 1346.00,919.04 1346.50,919.04 1347.00,919.04 1347.50,919.05 1348.00,919.05 1348.50,919.05 1349.00,919.05 1349.50,919.05 1350.00,919.05 1350.50,919.06 1351.00,919.06 1351.50,919.06 1352.00,919.06 1352.50,919.06 1353.00,919.07 1353.50,919.07 1354.00,919.07 1354.50,919.07 1355.00,919.07 1355.50,919.07 1356.00,919.08 1356.50,919.08 1357.00,919.08 1357.50,919.08 1358.00,919.08 1358.50,919.09 1359.00,919.09 1359.50,919.09 1360.00,919.09 1360.50,919.09 1361.00,919.09 1361.50,919.10 1362.00,919.10 1362.50,919.10 1363.00,919.10 1363.50,919.10 1364.00,919.10 1364.50,919.11 1365.00,919.11 1365.50,919.11 1366.00,919.11 1366.50,919.11 1367.00,919.12 1367.50,919.12 1368.00,919.12 1368.50,919.12 1369.00,919.12 1369.50,919.12 1370.00,919.13 1370.50,919.13 1371.00,919.13 1371.50,919.13 1372.00,919.13 1372.50,919.13 1373.00,919.14 1373.50,919.14 1374.00,919.14 1374.50,919.14 1375.00,919.14 1375.50,919.14 1376.00,919.15 1376.50,919.15 1377.00,919.15 1377.50,919.15 1378.00,919.15 1378.50,919.15 1379.00,919.16 1379.50,919.16 1380.00,919.16 1380.50,919.16 1381.00,919.16 1381.50,919.16 1382.00,919.17 1382.50,919.17 1383.00,919.17 1383.50,919.17 1384.00,919.17 1384.50,919.17 1385.00,919.18 1385.50,919.18 1386.00,919.18 1386.50,919.18 1387.00,919.18 1387.50,919.18 1388.00,919.18 1388.50,919.19 1389.00,919.19 1389.50,919.19 1390.00,919.19 1390.50,919.19 1391.00,919.19 1391.50,919.20 1392.00,919.20 1392.50,919.20 1393.00,919.20 1393.50,919.20 1394.00,919.20 1394.50,919.21 1395.00,919.21 1395.50,919.21 1396.00,919.21 1396.50,919.21 1397.00,919.21 1397.50,919.21 1398.00,919.22 1398.50,919.22 1399.00,919.22 1399.50,919.22 1400.00,919.22 1400.50,919.22 1401.00,919.23 1401.50,919.23 1402.00,919.23 1402.50,919.23 1403.00,919.23 1403.50,919.23 1404.00,919.23 1404.50,919.24 1405.00,919.24 1405.50,919.24 1406.00,919.24 1406.50,919.24 1407.00,919.24 1407.50,919.25 1408.00,919.25 1408.50,919.25 1409.00,919.25 1409.50,919.25 1410.00,919.25 1410.50,919.25 1411.00,919.26 1411.50,919.26 1412.00,919.26 1412.50,919.26 1413.00,919.26 1413.50,919.26 1414.00,919.26 1414.50,919.27 1415.00,919.27 1415.50,919.27 1416.00,919.27 1416.50,919.27 1417.00,919.27 1417.50,919.27 1418.00,919.28 1418.50,919.28 1419.00,919.28 1419.50,919.28 1420.00,919.28 1420.50,919.28 1421.00,919.28 1421.50,919.29 1422.00,919.29 1422.50,919.29 1423.00,919.29 1423.50,919.29 1424.00,919.29 1424.50,919.29 1425.00,919.30 1425.50,919.30 1426.00,919.30 1426.50,919.30 1427.00,919.30 1427.50,919.30 1428.00,919.30 1428.50,919.31 1429.00,919.31 1429.50,919.31 1430.00,919.31 1430.50,919.31 1431.00,919.31 1431.50,919.31 1432.00,919.32 1432.50,919.32 1433.00,919.32 1433.50,919.32 1434.00,919.32 1434.50,919.32 1435.00,919.32 1435.50,919.32 1436.00,919.33 1436.50,919.33 1437.00,919.33 1437.50,919.33 1438.00,919.33 1438.50,919.33 1439.00,919.33 1439.50,919.34 1440.00,919.34 1440.50,919.34 1441.00,919.34 1441.50,919.34 1442.00,919.34 1442.50,919.34 1443.00,919.34 1443.50,919.35 1444.00,919.35 1444.50,919.35 1445.00,919.35 1445.50,919.35 1446.00,919.35 1446.50,919.35 1447.00,919.36 1447.50,919.36 1448.00,919.36 1448.50,919.36 1449.00,919.36 1449.50,919.36 1450.00,919.36 1450.50,919.36 1451.00,919.37 1451.50,919.37 1452.00,919.37 1452.50,919.37 1453.00,919.37 1453.50,919.37 1454.00,919.37 1454.50,919.37 1455.00,919.38 1455.50,919.38 1456.00,919.38 1456.50,919.38 1457.00,919.38 1457.50,919.38 1458.00,919.38 1458.50,919.38 1459.00,919.39 1459.50,919.39 1460.00,919.39 1460.50,919.39 1461.00,919.39 1461.50,919.39 1462.00,919.39 1462.50,919.39 1463.00,919.40 1463.50,919.40 1464.00,919.40 1464.50,919.40 1465.00,919.40 1465.50,919.40 1466.00,919.40 1466.50,919.40 1467.00,919.41 1467.50,919.41 1468.00,919.41 1468.50,919.41 1469.00,919.41 1469.50,919.41 1470.00,919.41 1470.50,919.41 1471.00,919.42 1471.50,919.42 1472.00,919.42 1472.50,919.42 1473.00,919.42 1473.50,919.42 1474.00,919.42 1474.50,919.42 1475.00,919.43 1475.50,919.43 1476.00,919.43 1476.50,919.43 1477.00,919.43 1477.50,919.43 1478.00,919.43 1478.50,919.43 1479.00,919.43 1479.50,919.44 1480.00,919.44 1480.50,919.44 1481.00,919.44 1481.50,919.44 1482.00,919.44 1482.50,919.44 1483.00,919.44 1483.50,919.45 1484.00,919.45 1484.50,919.45 1485.00,919.45 1485.50,919.45 1486.00,919.45 1486.50,919.45 1487.00,919.45 1487.50,919.45 1488.00,919.46 1488.50,919.46 1489.00,919.46 1489.50,919.46 1490.00,919.46 1490.50,919.46 1491.00,919.46 1491.50,919.46 1492.00,919.46 1492.50,919.47 1493.00,919.47 1493.50,919.47 1494.00,919.47 1494.50,919.47 1495.00,919.47 1495.50,919.47 1496.00,919.47 1496.50,919.47 1497.00,919.48 1497.50,919.48 1498.00,919.48 1498.50,919.48 1499.00,919.48 1499.50,919.48 1500.00,919.48 1500.50,919.48 1501.00,919.48 1501.50,919.49 1502.00,919.49 1502.50,919.49 1503.00,919.49 1503.50,919.49 1504.00,919.49 1504.50,919.49 1505.00,919.49 1505.50,919.49 1506.00,919.50 1506.50,919.50 1507.00,919.50 1507.50,919.50 1508.00,919.50 1508.50,919.50 1509.00,919.50 1509.50,919.50 1510.00,919.50 1510.50,919.51 1511.00,919.51 1511.50,919.51 1512.00,919.51 1512.50,919.51 1513.00,919.51 1513.50,919.51 1514.00,919.51 1514.50,919.51 1515.00,919.51 1515.50,919.52 1516.00,919.52 1516.50,919.52 1517.00,919.52 1517.50,919.52 1518.00,919.52 1518.50,919.52 1519.00,919.52 1519.50,919.52 1520.00,919.53 1520.50,919.53 1521.00,919.53 1521.50,919.53 1522.00,919.53 1522.50,919.53 1523.00,919.53 1523.50,919.53 1524.00,919.53 1524.50,919.53 1525.00,919.54 1525.50,919.54 1526.00,919.54 1526.50,919.54 1527.00,919.54 1527.50,919.54 1528.00,919.54 1528.50,919.54 1529.00,919.54 1529.50,919.54 1530.00,919.55 1530.50,919.55 1531.00,919.55 1531.50,919.55 1532.00,919.55 1532.50,919.55 1533.00,919.55 1533.50,919.55 1534.00,919.55 1534.50,919.55 1535.00,919.56 1535.50,919.56 1536.00,919.56 1536.50,919.56 1537.00,919.56 1537.50,919.56 1538.00,919.56 1538.50,919.56 1539.00,919.56 1539.50,919.56 1540.00,919.57 1540.50,919.57 1541.00,919.57 1541.50,919.57 1542.00,919.57 1542.50,919.57 1543.00,919.57 1543.50,919.57 1544.00,919.57 1544.50,919.57 1545.00,919.58 1545.50,919.58 1546.00,919.58 1546.50,919.58 1547.00,919.58 1547.50,919.58 1548.00,919.58 1548.50,919.58 1549.00,919.58 1549.50,919.58 1550.00,919.58 1550.50,919.59 1551.00,919.59 1551.50,919.59 1552.00,919.59 1552.50,919.59 1553.00,919.59 1553.50,919.59 1554.00,919.59 1554.50,919.59 1555.00,919.59 1555.50,919.60 1556.00,919.60 1556.50,919.60 1557.00,919.60 1557.50,919.60 1558.00,919.60 1558.50,919.60 1559.00,919.60 1559.50,919.60 1560.00,919.60 1560.50,919.60 1561.00,919.61 1561.50,919.61 1562.00,919.61 1562.50,919.61 1563.00,919.61 1563.50,919.61 1564.00,919.61 1564.50,919.61 1565.00,919.61 1565.50,919.61 1566.00,919.61 1566.50,919.62 1567.00,919.62 1567.50,919.62 1568.00,919.62 1568.50,919.62 1569.00,919.62 1569.50,919.62 1570.00,919.62 1570.50,919.62 1571.00,919.62 1571.50,919.62 1572.00,919.63 1572.50,919.63 1573.00,919.63 1573.50,919.63 1574.00,919.63 1574.50,919.63 1575.00,919.63 1575.50,919.63 1576.00,919.63 1576.50,919.63 1577.00,919.63 1577.50,919.64 1578.00,919.64 1578.50,919.64 1579.00,919.64 1579.50,919.64 1580.00,919.64 1580.50,919.64 1581.00,919.64 1581.50,919.64 1582.00,919.64 1582.50,919.64 1583.00,919.65 1583.50,919.65 1584.00,919.65 1584.50,919.65 1585.00,919.65 1585.50,919.65 1586.00,919.65 1586.50,919.65 1587.00,919.65 1587.50,919.65 1588.00,919.65 1588.50,919.65 1589.00,919.66 1589.50,919.66 1590.00,919.66 1590.50,919.66 1591.00,919.66 1591.50,919.66 1592.00,919.66 1592.50,919.66 1593.00,919.66 1593.50,919.66 1594.00,919.66 1594.50,919.66 1595.00,919.67 1595.50,919.67 1596.00,919.67 1596.50,919.67 1597.00,919.67 1597.50,919.67 1598.00,919.67 1598.50,919.67 1599.00,919.67 1599.50,919.67 1600.00,919.67 1600.50,919.67 1601.00,919.68 1601.50,919.68 1602.00,919.68 1602.50,919.68 1603.00,919.68 1603.50,919.68 1604.00,919.68 1604.50,919.68 1605.00,919.68 1605.50,919.68 1606.00,919.68 1606.50,919.68 1607.00,919.69 1607.50,919.69 1608.00,919.69 1608.50,919.69"/>
</svg>
    </div>
  </div>
</div>
<div id="status" class="a">
  <div class="a" style="left:0;top:0;width:1680px;height:1px;background:#8c8c8c"></div>
  <div class="a" style="left:0;top:1px;width:1680px;height:1px;background:#fff"></div>
  <div class="a" style="left:1679px;top:2px;width:1px;height:19px;background:#c8c8c8"></div>
  <div class="a" style="left:0;top:21px;width:1680px;height:1px;background:#fafafa"></div>
</div>
</body></html>
